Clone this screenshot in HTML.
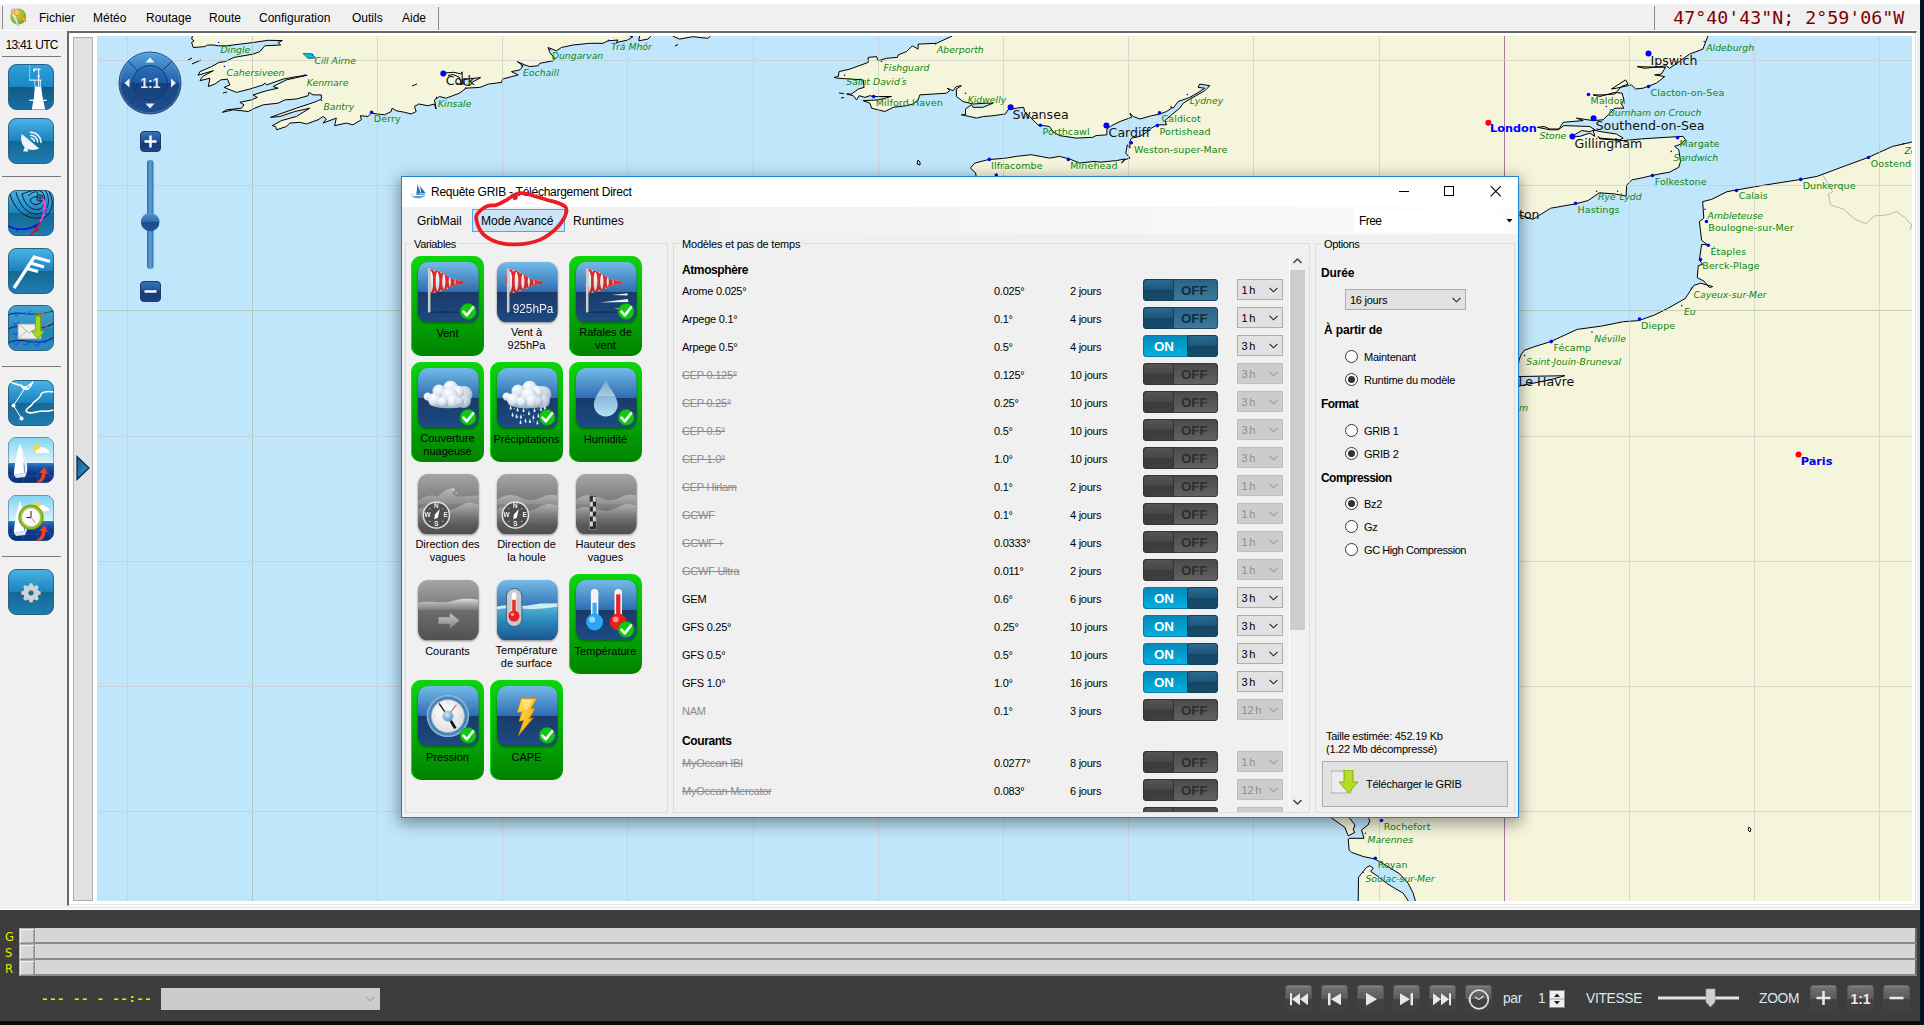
<!DOCTYPE html><html lang="fr"><head><meta charset="utf-8"><title>Requête GRIB</title><style>
*{box-sizing:border-box;margin:0;padding:0}
html,body{width:1924px;height:1025px;overflow:hidden}
body{position:relative;background:#f0f0f0;font-family:"Liberation Sans",sans-serif;font-size:12px;color:#000}
.abs{position:absolute}
#topwhite{left:0;top:0;width:1920px;height:4px;background:#fff}
#rblack{left:1920px;top:0;width:4px;height:1025px;background:#00102a}
#menubar{left:0;top:4px;width:1920px;height:27px;background:#f0f0f0;border-bottom:1px solid #fff}
#menubar span{position:absolute;top:7px;font-size:12px;white-space:nowrap}
.vsep{position:absolute;width:1px;background:#8a8a8a}
#coords{left:1673.2px;top:6.8px;font-family:"DejaVu Sans Mono",monospace;font-size:18.3px;color:#800000;white-space:pre;line-height:22px}
#utc{left:5.500px;top:38px;word-spacing:1px;font-size:12px;line-height:14px;letter-spacing:-.75px;white-space:nowrap}
.hsep{position:absolute;left:2px;width:59px;height:1px;background:#7a7a7a}
.sico{position:absolute;left:8px}
#frame{left:67px;top:31px;width:1850px;height:875px;background:#fff;border-top:2px solid #696969;border-left:2px solid #696969;border-right:1px solid #fff;border-bottom:1px solid #fff}
#frame i{position:absolute;left:0;top:0;right:0;bottom:0;border-right:1px solid #e3e3e3;border-bottom:1px solid #e3e3e3}
#strip{left:73px;top:37px;width:20px;height:864px;background:#e1e1e1;border:1px solid #adadad}
.map{position:absolute;left:97px;top:36px}
.li{font:italic 9.3px "DejaVu Sans",sans-serif;fill:#0d850d}
.lr{font:9.5px "DejaVu Sans",sans-serif;fill:#0d850d;letter-spacing:.1px}
.lb{font:12.6px "DejaVu Sans",sans-serif;fill:#111}
.lc{font:bold 11.3px "DejaVu Sans",sans-serif;fill:#0000ff}
#bottom{left:0;top:909px;width:1920px;height:112px;background:#3d3d3d;border-top:1px solid #fff}
#bblack{left:0;top:1021px;width:1920px;height:4px;background:#0a0a0a}
.trk{position:absolute;left:35px;width:1882px;height:16px;background:#d6d6d6;border-bottom:2px solid #8a8a8a;border-right:2px solid #696969}
.cb{position:absolute;left:19px;width:16px;height:16px;background:#d6d6d6;border:1px solid #8c8c8c;border-top-color:#b4b4b4;border-left-color:#b4b4b4;box-shadow:inset 1px 1px 0 0 #f2f2f2,inset -1px -1px 0 0 #a8a8a8}
.gsr{position:absolute;left:5px;font:11.5px "DejaVu Sans",sans-serif;color:#e8e800;line-height:12px}
#dashes{left:41px;top:991px;transform:scaleX(1.317);transform-origin:0 0;font:bold 10px "DejaVu Sans Mono",monospace;color:#e8e800;white-space:pre;line-height:16px}
#combo{left:161px;top:988px;width:219px;height:22px;background:#cccccc}
.pb{position:absolute;top:985px;width:27px;height:27px;border-radius:4px 4px 3px 3px;background:linear-gradient(#8e8e8e 0,#6e6e6e 12%,#5a5a5a 50%,#424242 52%,#3f3f3f 100%);box-shadow:inset 0 0 0 1px rgba(70,70,70,.5)}
.pb svg{position:absolute;left:0;top:0}
.btxt{position:absolute;color:#dfe6ee;letter-spacing:-.3px;font-size:13.8px;line-height:16px;white-space:nowrap}
/* dialog */
#dlg{left:401px;top:176px;width:1118px;height:642px;background:#f0f0f0;box-shadow:0 0 0 1px #1883d7 inset,0 4px 14px 2px rgba(0,0,0,.38)}
#dlg .bd{position:absolute;left:0;top:0;width:1118px;height:642px;border:1px solid #1883d7;pointer-events:none}
#title{left:1px;top:1px;width:1116px;height:30px;background:#fff}
#title span{position:absolute;left:29px;top:8px;font-size:12px;line-height:14px;white-space:nowrap;letter-spacing:-.26px}
#strip2{left:1px;top:31px;width:1116px;height:27px;background:linear-gradient(90deg,#f0f0f0 0,#f2f2f2 35%,#f7f7f7 70%,#fbfbfb 100%)}
.tab{position:absolute;top:38px;font-size:12px;line-height:14px;white-space:nowrap}
#tabsel{left:71px;top:33px;width:93px;height:23px;background:#cce4f7;border:1px solid #5aa4e8}
#free{left:954px;top:33px;width:148px;height:23px;background:#fff}
#free span{position:absolute;left:4px;top:5px;font-size:12px;line-height:14px;letter-spacing:-.6px}
.grp{position:absolute;border:1px solid #dcdcdc}
.grp>b{position:absolute;top:-6.5px;left:6px;background:#f0f0f0;padding:0 2px;font-weight:normal;font-size:11px;line-height:13px;white-space:nowrap;letter-spacing:-.35px}
.tile{position:absolute;width:73px;height:100px;border-radius:10px}
.tile.sel{background:linear-gradient(#0bd50b,#06b406 45%,#008300);box-shadow:inset 1px 0 0 #12e212}
.tico{position:absolute;left:7px;top:5.800px;filter:drop-shadow(0 1.5px 1px rgba(0,0,0,.45))}
.tl{position:absolute;left:-6.5px;width:86px;top:71px;text-align:center;font-size:11px;line-height:12.5px;white-space:nowrap}
.tl.two{top:70px}
.row{position:absolute;left:0;height:22px;width:640px}
.row span{position:absolute;top:5.5px;font-size:11px;line-height:13px;white-space:nowrap;letter-spacing:-.25px}
.row .n{left:281px}.row .r{left:593px}.row .d{left:669px}
.row.dis .n{color:#8a8a8a;text-decoration:line-through}
.row.nam .n{color:#8a8a8a}
.hd{position:absolute;left:281px;font-weight:bold;font-size:12px;line-height:13px;letter-spacing:-.4px}
.tg{position:absolute;left:742px;top:0;width:75px;height:22px;border-radius:4px;overflow:hidden}
.tg b{position:absolute;top:3.8px;font-size:13.3px;line-height:16px;font-weight:bold}
.tg i{position:absolute;top:0;width:31px;height:22px;border-radius:4px}
.tg.off{background:linear-gradient(#2a6486,#3d7a9c);box-shadow:inset 0 0 0 1px #1d4a68}
.tg.off i{left:0;background:linear-gradient(#2d6c92 0,#1c587e 48%,#154866 52%,#174b6a);box-shadow:inset 0 0 0 1px #133f5c}
.tg.off b{left:38px;color:#0e2f45}
.tg.on{background:linear-gradient(#0488ba,#02b2e2);box-shadow:inset 0 0 0 1px #0a78a8}
.tg.on i{left:44px;background:linear-gradient(#2d6c92 0,#1c587e 48%,#154866 52%,#174b6a);box-shadow:inset 0 0 0 1px #133f5c}
.tg.on b{left:11px;color:#fff}
.tg.dis{background:linear-gradient(#4a4a4a,#626262);box-shadow:inset 0 0 0 1px #3a3a3a}
.tg.dis i{left:0;background:linear-gradient(#555 0,#474747 48%,#3c3c3c 52%,#404040);box-shadow:inset 0 0 0 1px #333}
.tg.dis b{left:38px;color:#2e2e2e}
.sel2{position:absolute;left:836px;top:0;width:46px;height:21px;background:#e1e1e1;border:1px solid #adadad}
.sel2 span{left:3.5px;top:4px;font-size:11px;letter-spacing:0;word-spacing:-1.5px}
.sel2.dis{background:#cccccc;border-color:#bfbfbf}.sel2.dis span{color:#8c8c8c}
.sel2 svg{position:absolute;right:4px;top:7px}
.opt{position:absolute;font-size:11px;line-height:13px;white-space:nowrap;letter-spacing:-.25px}
.opth{position:absolute;font-weight:bold;font-size:12px;line-height:13px;white-space:nowrap;letter-spacing:-.15px}
.rad{position:absolute;width:13px;height:13px;border-radius:50%;border:1px solid #333;background:#fff}
.rad.on:after{content:"";position:absolute;left:2px;top:2px;width:7px;height:7px;border-radius:50%;background:#333}
</style></head><body><div id="topwhite" class="abs"></div><div id="menubar" class="abs"><div class="vsep" style="left:2px;top:2px;height:23px"></div><svg class="abs" style="left:9px;top:2px" width="20" height="22" viewBox="0 0 20 22"><defs><radialGradient id="mg" cx=".4" cy=".35" r=".7"><stop offset="0" stop-color="#b4e05a"/><stop offset="1" stop-color="#6aaa20"/></radialGradient></defs><circle cx="9.200" cy="10.500" r="8" fill="url(#mg)"/><path d="M4 4.500 C5.500 6 7.500 8 7 10 C6.500 12 8 13 8.500 15 C9 17 9.500 19 9.500 19.500 L8.500 20 L7.500 18 C7 16 5.500 14 5 12 C3.500 11 3 9 3 7Z" fill="#e8e8ee" stroke="#a8a8b4" stroke-width=".500"/><circle cx="4.500" cy="5" r="2.200" fill="none" stroke="#b0b0bc" stroke-width="1"/><path d="M9.500 8.500 L16 14.500" stroke="#f6a21e" stroke-width="2.800" stroke-linecap="round"/><circle cx="8" cy="6.500" r="3.200" fill="#fcc84a" stroke="#e89010" stroke-width=".800"/><circle cx="7.300" cy="5.600" r="1" fill="#c8d8e8"/></svg><span style="left:39px">Fichier</span><span style="left:93px">Météo</span><span style="left:146px">Routage</span><span style="left:209px">Route</span><span style="left:259px">Configuration</span><span style="left:352px">Outils</span><span style="left:402px">Aide</span><div class="vsep" style="left:438px;top:3px;height:23px"></div><div class="vsep" style="left:1654px;top:2px;height:24px"></div></div><div id="coords" class="abs">47°40'43"N; 2°59'06"W</div><div id="utc" class="abs">13:41 UTC</div><div class="hsep" style="top:56px"></div><div class="hsep" style="top:176px"></div><div class="hsep" style="top:366px"></div><div class="hsep" style="top:556px"></div><svg class="sico" style="top:64px" width="46" height="46" viewBox="0 0 46 46"><defs><linearGradient id="sb1" x1="0" y1="0" x2="0" y2="1"><stop offset="0" stop-color="#2ba2de"/><stop offset=".5" stop-color="#1c86c4"/><stop offset=".5" stop-color="#125a84"/><stop offset="1" stop-color="#1870a6"/></linearGradient><clipPath id="sc1"><rect x=".5" y=".5" width="45" height="45" rx="8"/></clipPath></defs><rect x=".5" y=".5" width="45" height="45" rx="8" fill="url(#sb1)" stroke="#2a5f80" stroke-width="1"/><g clip-path="url(#sc1)"><g fill="#fff" stroke="none"><path d="M26.800 22.400 L33.200 22.400 L34.500 33 L37.300 46 L23.700 46 L26 33Z"/><rect x="21.300" y="35.700" width="17.400" height="1.200"/><rect x="30.100" y="4.900" width="1.100" height="17.600"/><rect x="25.500" y="4.600" width="7" height="1.100"/><path d="M25.500 4.600 v3.600 l2.200 -1.800z"/><rect x="29.600" y="11" width="2" height="2.400"/><rect x="21" y="15.600" width="12.500" height="1"/><rect x="26.400" y="16" width=".900" height="6.500" opacity=".8"/><rect x="32" y="16" width=".900" height="6.500" opacity=".8"/><rect x="21.400" y="1" width=".800" height="15" opacity=".6"/></g></g></svg>
<svg class="sico" style="top:118px" width="46" height="46" viewBox="0 0 46 46"><defs><linearGradient id="sb2" x1="0" y1="0" x2="0" y2="1"><stop offset="0" stop-color="#49b4e6"/><stop offset=".5" stop-color="#1b82bd"/><stop offset=".5" stop-color="#156892"/><stop offset="1" stop-color="#1f7db2"/></linearGradient><clipPath id="sc2"><rect x=".5" y=".5" width="45" height="45" rx="8"/></clipPath></defs><rect x=".5" y=".5" width="45" height="45" rx="8" fill="url(#sb2)" stroke="#2a5f80" stroke-width="1"/><g clip-path="url(#sc2)"><g fill="#eef4f8"><path d="M13.800 16 C12 22 14 28 18 30 C22 32.500 27 32.500 31.300 30.500Z"/><path d="M16.500 29 L15.300 33.600 L20.200 33.600 L19.800 30.800Z"/></g><g fill="none" stroke="#eef4f8" stroke-width="1.600" stroke-linecap="round"><path d="M23.400 20.200 A3.800 3.800 0 0 1 26.300 23.400"/><path d="M22.900 17.200 A7 7 0 0 1 29.600 24"/><path d="M22.300 14.200 A10.500 10.500 0 0 1 33 24.500"/></g></g></svg>
<svg class="sico" style="top:190px" width="46" height="46" viewBox="0 0 46 46"><defs><linearGradient id="sb3" x1="0" y1="0" x2="0" y2="1"><stop offset="0" stop-color="#49b4e6"/><stop offset=".5" stop-color="#1b82bd"/><stop offset=".5" stop-color="#156892"/><stop offset="1" stop-color="#1f7db2"/></linearGradient><clipPath id="sc3"><rect x=".5" y=".5" width="45" height="45" rx="8"/></clipPath></defs><rect x=".5" y=".5" width="45" height="45" rx="8" fill="url(#sb3)" stroke="#2a5f80" stroke-width="1"/><g clip-path="url(#sc3)"><g fill="none" stroke="#0c1c2c" stroke-width="1"><path d="M2 4 C6 20 20 32 36 27 C46 23 46 8 40 0"/><path d="M8 2 C12 18 22 27 34 23 C42 19 42 6 37 0"/><path d="M14 4 C16 14 24 22 32 19 C38 16 38 6 34 2 C28 -2 20 2 14 4"/><path d="M20 6 C24 2 30 0 30 4 C30 8 24 6 22 10 C24 16 32 16 34 10"/><circle cx="32" cy="8" r="3.2"/><circle cx="32" cy="8" r="1.2"/></g><path d="M0 36 C10 41 22 40 30 34" fill="none" stroke="#0a18e0" stroke-width="1.6"/><path d="M8 39 l3 0 l-1.5 3z M26 37 l3 -1.5 l-.5 3.5z" fill="#0a18e0"/><path d="M35 8 C38 16 36 26 32 32" fill="none" stroke="#ff3cf0" stroke-width="1.6"/><path d="M36 10 l2.5 1.5 l-2.5 1.5z M36.5 17 l2.5 1.5 l-2.5 1.5z M35.5 24 l2.5 1.5 l-3 1.5z" fill="#ff3cf0"/><path d="M32 32 C29 38 26 42 22 46" fill="none" stroke="#e01010" stroke-width="1.6"/><circle cx="28.5" cy="40" r="2" fill="#e01010"/></g></svg>
<svg class="sico" style="top:248px" width="46" height="46" viewBox="0 0 46 46"><defs><linearGradient id="sb4" x1="0" y1="0" x2="0" y2="1"><stop offset="0" stop-color="#49b4e6"/><stop offset=".5" stop-color="#1b82bd"/><stop offset=".5" stop-color="#156892"/><stop offset="1" stop-color="#1f7db2"/></linearGradient><clipPath id="sc4"><rect x=".5" y=".5" width="45" height="45" rx="8"/></clipPath></defs><rect x=".5" y=".5" width="45" height="45" rx="8" fill="url(#sb4)" stroke="#2a5f80" stroke-width="1"/><g clip-path="url(#sc4)"><g stroke="#fff" stroke-width="3.2" fill="none" stroke-linecap="butt"><path d="M6 40 L27 8"/><path d="M26 9 L42 13.5"/><path d="M22.5 15 L36 19"/><path d="M19 20.5 L30 23.5"/></g></g></svg>
<svg class="sico" style="top:305px" width="46" height="46" viewBox="0 0 46 46"><defs><linearGradient id="sb5" x1="0" y1="0" x2="0" y2="1"><stop offset="0" stop-color="#3fa6d4"/><stop offset=".5" stop-color="#2b8fc0"/><stop offset=".5" stop-color="#2383b4"/><stop offset="1" stop-color="#2a8aba"/></linearGradient><clipPath id="sc5"><rect x=".5" y=".5" width="45" height="45" rx="8"/></clipPath></defs><rect x=".5" y=".5" width="45" height="45" rx="8" fill="url(#sb5)" stroke="#2a5f80" stroke-width="1"/><g clip-path="url(#sc5)"><g fill="none" stroke-width="1.1"><path d="M0 10 C10 4 20 14 46 6" stroke="#10307a"/><path d="M0 24 C14 16 26 30 46 18" stroke="#10307a"/><path d="M0 38 C14 30 30 44 46 32" stroke="#10307a"/><path d="M6 9 l3 2 l4 -4 M16 7 l3 2 l4 -3" stroke="#2a60ff"/><path d="M25 8 l3 2 l4 -3 M35 8 l3 1 l4 -3" stroke="#3a9a2a"/><path d="M30 8 l3 1.5 l3 -3 M36 20 l2 1 l4 -4" stroke="#e06a20"/><path d="M5 18 l3 2 l3 -3 M5 28 l3 2 l3 -3 M5 38 l3 2 l4 -4 M15 39 l3 1 l4 -3 M26 39 l3 2 l4 -4 M34 37 l3 1 l4 -3" stroke="#1a50ff"/></g><rect x="10" y="19" width="23" height="15" fill="#eeeeee" stroke="#9a9a9a" stroke-width=".8"/><path d="M10 19 L21.5 28 L33 19 M10 34 L18.5 26 M33 34 L24.5 26" fill="none" stroke="#aaa" stroke-width=".8"/><path d="M27.5 11 h5 v15 h4 l-6.5 8 l-6.5 -8 h4z" fill="#a6d81a" stroke="#6f9a10" stroke-width=".8"/></g></svg>
<svg class="sico" style="top:380px" width="46" height="46" viewBox="0 0 46 46"><defs><linearGradient id="sb6" x1="0" y1="0" x2="0" y2="1"><stop offset="0" stop-color="#49b4e6"/><stop offset=".5" stop-color="#1b82bd"/><stop offset=".5" stop-color="#156892"/><stop offset="1" stop-color="#1f7db2"/></linearGradient><clipPath id="sc6"><rect x=".5" y=".5" width="45" height="45" rx="8"/></clipPath></defs><rect x=".5" y=".5" width="45" height="45" rx="8" fill="url(#sb6)" stroke="#2a5f80" stroke-width="1"/><g clip-path="url(#sc6)"><g fill="none" stroke="#fff" stroke-width="1.5" stroke-linejoin="round"><path d="M0 2 C6 2 10 6 13 5 C17 10 22 4 25 2 C22 8 20 9 19 10"/><path d="M46 12 C40 11 36 11 33 14 C33 18 28 20 26 22 C22 28 18 28 18 31 C22 36 30 30 36 31 C40 32 44 30 46 30"/><path d="M13 5 C15 12 20 7 20 9"/></g><path d="M17 8 L5.5 25.5 L13.5 38.5" fill="none" stroke="#fff" stroke-width="1"/><g fill="#fff"><circle cx="17" cy="8" r="2"/><circle cx="5.5" cy="25.5" r="2"/><circle cx="13.5" cy="38.5" r="2"/></g></g></svg>
<svg class="sico" style="top:437px" width="46" height="46" viewBox="0 0 46 46"><defs><linearGradient id="sb7" x1="0" y1="0" x2="0" y2="1"><stop offset="0" stop-color="#49b4e6"/><stop offset=".5" stop-color="#1b82bd"/><stop offset=".5" stop-color="#156892"/><stop offset="1" stop-color="#1f7db2"/></linearGradient><clipPath id="sc7"><rect x=".5" y=".5" width="45" height="45" rx="8"/></clipPath></defs><rect x=".5" y=".5" width="45" height="45" rx="8" fill="url(#sb7)" stroke="#2a5f80" stroke-width="1"/><g clip-path="url(#sc7)"><defs><linearGradient id="sk7" x1="0" y1="0" x2="0" y2="1"><stop offset="0" stop-color="#7fd4f4"/><stop offset="1" stop-color="#dff3fb"/></linearGradient><linearGradient id="se7" x1="0" y1="0" x2="0" y2="1"><stop offset="0" stop-color="#2f7fc8"/><stop offset=".35" stop-color="#123c8c"/><stop offset="1" stop-color="#0e2f78"/></linearGradient></defs><rect x="0" y="0" width="46" height="27" fill="url(#sk7)"/><rect x="0" y="26" width="46" height="20" fill="url(#se7)"/><g stroke="#3a6ac0" stroke-width=".6" opacity=".7"><path d="M0 33 H46 M0 39 H46 M8 27 L2 46 M18 27 L15 46 M28 27 L30 46 M38 27 L44 46"/></g><path d="M12 6 C8 18 6 30 6 38 L16 36 C16 24 14 12 12 6Z" fill="#fff"/><path d="M13 9 C18 18 20 28 19 35 L16.5 36 C17 26 15 16 13 9Z" fill="#e4eef6"/><path d="M6 38 L19 35 L17 40 L8 41Z" fill="#dfe8f0"/><path d="M26 46 C32 44 34 40 34 36 L31 36 L36.5 30 L40 37 L37.5 36.5 C37 42 35 45 32 46Z" fill="#e8422a"/><circle cx="29" cy="11" r="3" fill="#ffd820"/><g stroke="#ffd820" stroke-width="1"><path d="M29 5.5 v2 M24 8 l1.6 1.2 M33.5 7 l-1.4 1.4 M24 13 l1.8 -.6"/></g><path d="M28 16 a3 3 0 0 1 3 -4 a4 4 0 0 1 7 0 a3 3 0 0 1 3 4z" fill="#fff"/></g></svg>
<svg class="sico" style="top:495px" width="46" height="46" viewBox="0 0 46 46"><defs><linearGradient id="sb8" x1="0" y1="0" x2="0" y2="1"><stop offset="0" stop-color="#49b4e6"/><stop offset=".5" stop-color="#1b82bd"/><stop offset=".5" stop-color="#156892"/><stop offset="1" stop-color="#1f7db2"/></linearGradient><clipPath id="sc8"><rect x=".5" y=".5" width="45" height="45" rx="8"/></clipPath></defs><rect x=".5" y=".5" width="45" height="45" rx="8" fill="url(#sb8)" stroke="#2a5f80" stroke-width="1"/><g clip-path="url(#sc8)"><defs><linearGradient id="sk8" x1="0" y1="0" x2="0" y2="1"><stop offset="0" stop-color="#7fd4f4"/><stop offset="1" stop-color="#dff3fb"/></linearGradient><linearGradient id="se8" x1="0" y1="0" x2="0" y2="1"><stop offset="0" stop-color="#2f7fc8"/><stop offset=".35" stop-color="#123c8c"/><stop offset="1" stop-color="#0e2f78"/></linearGradient></defs><rect x="0" y="0" width="46" height="27" fill="url(#sk8)"/><rect x="0" y="26" width="46" height="20" fill="url(#se8)"/><g stroke="#3a6ac0" stroke-width=".6" opacity=".7"><path d="M0 33 H46 M0 39 H46 M8 27 L2 46 M18 27 L15 46 M28 27 L30 46 M38 27 L44 46"/></g><path d="M12 6 C8 18 6 30 6 38 L16 36 C16 24 14 12 12 6Z" fill="#fff"/><path d="M13 9 C18 18 20 28 19 35 L16.5 36 C17 26 15 16 13 9Z" fill="#e4eef6"/><path d="M6 38 L19 35 L17 40 L8 41Z" fill="#dfe8f0"/><path d="M26 46 C32 44 34 40 34 36 L31 36 L36.5 30 L40 37 L37.5 36.5 C37 42 35 45 32 46Z" fill="#e8422a"/><circle cx="29" cy="11" r="3" fill="#ffd820"/><g stroke="#ffd820" stroke-width="1"><path d="M29 5.5 v2 M24 8 l1.6 1.2 M33.5 7 l-1.4 1.4 M24 13 l1.8 -.6"/></g><path d="M28 16 a3 3 0 0 1 3 -4 a4 4 0 0 1 7 0 a3 3 0 0 1 3 4z" fill="#fff"/><circle cx="23" cy="22.300" r="12.300" fill="#8cc024" stroke="#5d8a10" stroke-width=".8"/><circle cx="23" cy="22.300" r="9.200" fill="#fafafa" stroke="#c8d8a0" stroke-width=".6"/><path d="M23 16 V22.5 H18.5" stroke="#222" stroke-width="1" fill="none"/><path d="M23 22.5 L27.5 28" stroke="#d03030" stroke-width=".7"/></g></svg>
<svg class="sico" style="top:569px" width="46" height="46" viewBox="0 0 46 46"><defs><linearGradient id="sb9" x1="0" y1="0" x2="0" y2="1"><stop offset="0" stop-color="#49b4e6"/><stop offset=".5" stop-color="#1b82bd"/><stop offset=".5" stop-color="#156892"/><stop offset="1" stop-color="#1f7db2"/></linearGradient><clipPath id="sc9"><rect x=".5" y=".5" width="45" height="45" rx="8"/></clipPath></defs><rect x=".5" y=".5" width="45" height="45" rx="8" fill="url(#sb9)" stroke="#2a5f80" stroke-width="1"/><g clip-path="url(#sc9)"><path transform="translate(23 23) scale(.88) translate(-23 -23)" fill="#d2d2d2" fill-rule="evenodd" d="M21.3 13 h3.4 l.6 2.6 l2 .8 l2.3 -1.4 l2.4 2.4 l-1.4 2.3 l.8 2 l2.6 .6 v3.4 l-2.6 .6 l-.8 2 l1.4 2.3 l-2.4 2.4 l-2.3 -1.4 l-2 .8 l-.6 2.6 h-3.4 l-.6 -2.6 l-2 -.8 l-2.3 1.4 l-2.4 -2.4 l1.4 -2.3 l-.8 -2 l-2.600 -.6 v-3.4 l2.600 -.6 l.8 -2 l-1.400 -2.300 l2.400 -2.400 l2.300 1.400 l2 -.8z M23 21 a3 3 0 1 0 .01 0z"/></g></svg><div id="frame" class="abs"><i></i></div><div id="strip" class="abs"></div><svg class="abs" style="left:75px;top:454px" width="16" height="28" viewBox="0 0 16 28"><defs><linearGradient id="tg1" x1="0" y1="0" x2="1" y2="1"><stop offset="0" stop-color="#1a5a90"/><stop offset="1" stop-color="#2f9ad8"/></linearGradient></defs><path d="M2 2.500 L14 14 L2 25.500Z" fill="url(#tg1)" stroke="#0c2438" stroke-width="1.200"/></svg><svg class="map" width="1815" height="865" viewBox="97 36 1815 865">
<rect x="97" y="36" width="1815" height="865" fill="#c0e6fc"/>
<path fill="#f5f5dc" stroke="#000" stroke-width="1" stroke-linejoin="round" d="M192.5 30 L192.5 36 L191.6 39.1 L194.1 40.8 L191.6 42.5 L193.3 47.5 L204.9 46.6 L207.4 45 L213.3 45 L218.3 45.8 L226.6 45.8 L253.2 42.5 L268.1 40.3 L282.3 40.6 L278.1 42.5 L280.6 45 L264.8 45.8 L259.8 51.6 L253.2 54.1 L234.1 57.4 L224.9 61.6 L219.1 62.4 L211.6 66.6 L200 71.6 L198 75.2 L213.3 70.7 L202.5 76.6 L200 80.7 L209.9 78.2 L208.3 86.5 L214.9 84.1 L220.7 79.9 L227.4 79.1 L229.9 84.9 L224.1 87.4 L236.5 92.4 L249.9 89 L263.2 84.9 L264.8 82.9 L266.5 84.9 L283.1 79.1 L296.4 76.6 L307.2 75.2 L286.4 79.9 L273.1 86.5 L278.1 88.2 L266.5 90.7 L253.2 94.9 L257.3 97.4 L251.5 99.9 L239.9 102.3 L244 104.8 L241.5 108.2 L226.6 109.8 L222.4 112.3 L233.2 109.8 L248.2 111.5 L254.8 108.2 L263.2 104.8 L278.1 103.2 L284.8 99.9 L296.4 99 L308.1 95.7 L308.9 92.4 L313.1 94.9 L321.4 94.9 L321.4 99 L316.4 101.5 L296.4 108.2 L279.8 114 L270.6 117.3 L279.8 116.5 L294.8 111.5 L309.7 108.2 L296.4 116.5 L281.5 120.6 L272.3 125.6 L275.6 126.5 L276.5 129.8 L286.4 126.5 L289.8 123.1 L299.8 122.3 L306.4 124 L318 119.8 L323 116.5 L326.4 119 L323 123.1 L336.3 118.1 L334.7 125.6 L346.3 123.1 L353 124.8 L361.3 119.8 L360.5 115.7 L367.9 116.5 L371.3 113.2 L384.6 114.8 L391.2 111.5 L392.1 108.2 L396.2 110.7 L404.5 112.3 L411.2 114 L416.2 111.5 L414.5 106.5 L418.7 104 L427.8 105.7 L434.5 104 L436.1 109 L434.5 99.9 L439.5 96.5 L446.1 98.2 L459.4 93.2 L466.1 88.2 L464.9 88.2 L479.9 87.4 L488.2 84.1 L501.5 82.4 L502.4 79.1 L518.2 74.9 L511.5 71.6 L519.8 69.9 L523.2 65.8 L517.3 61.6 L524.8 64.9 L529.8 66.6 L538.1 65.8 L539.8 63.3 L553.1 60.8 L554.8 58.3 L549.8 52.5 L548.1 47.5 L556.4 50.8 L561.4 47.5 L573.1 45 L589.7 43.3 L603 43.3 L608 40.8 L618 40 L616.3 42.5 L627.9 40 L632.9 36.7 L629.6 36 L629.6 30 Z"/>
<path fill="#f5f5dc" stroke="#000" stroke-width="1" stroke-linejoin="round" d="M639.6 30 L639.6 36 L638.8 40.8 L647.9 39.1 L650.4 36.7 L649.6 36 L649.6 30 Z"/>
<path fill="#f5f5dc" stroke="#000" stroke-width="1" stroke-linejoin="round" d="M672.8 30 L672.8 36 L679.5 39.1 L692.8 36.7 L707.8 38.3 L710.3 36 L710.3 30 Z"/>
<path fill="#f5f5dc" stroke="#000" stroke-width="1" stroke-linejoin="round" d="M952.2 30 L952.2 36 L936.4 43.3 L918.1 44.1 L918.1 49.1 L912.3 45.8 L906.5 51.6 L898.2 54.9 L897.3 57.4 L886.5 58.3 L878.2 60.8 L876.5 56.6 L868.2 57.4 L868.2 62.4 L849.9 69.1 L839.1 71.6 L838.3 76.6 L834.1 77.4 L837.5 78.2 L863.2 79.9 L864.1 87.4 L858.3 89 L851.6 94 L846.6 94 L853.3 95.7 L856.6 99.9 L859.1 95.7 L864.9 97.4 L869.9 95.7 L873.2 96.5 L891.5 96.5 L878.2 99.9 L863.2 100.7 L869.9 103.2 L871.6 108.2 L884.9 111.5 L893.2 107.3 L906.5 105.7 L913.1 104 L918.1 99.9 L919.8 94.9 L946.4 93.2 L949.7 90.7 L947.2 88.2 L953.1 90.7 L956.4 86.5 L961.4 85.7 L956.4 89 L956.4 96.5 L963 101.5 L973 104 L986.3 103.2 L993 103.2 L983 107.3 L973 107.3 L971.4 104.8 L965.5 109 L965.5 114.8 L961.4 114.8 L969.7 116.5 L976.3 118.1 L983.8 116.5 L993 115.7 L1005.4 114 L1007.9 109.8 L1016.3 108.2 L1023.7 107.3 L1024.6 111.5 L1029.6 116.5 L1037.9 124.8 L1042.9 125.6 L1049.5 126.5 L1052.8 131.5 L1059.5 135.6 L1076.1 138.1 L1092.8 137.3 L1096.1 135.6 L1106.9 134.8 L1106.9 129 L1111.6 125.6 L1120 121.5 L1131.6 117.3 L1129.9 113.2 L1133.3 116.5 L1139.9 119 L1151.6 115.7 L1159.9 114 L1166.5 111.5 L1171.5 108.2 L1170.7 106.5 L1173.2 108.2 L1178.2 101.5 L1189.8 97.4 L1199.8 91.5 L1204.8 88.2 L1198.1 87.4 L1199.8 84.1 L1209.8 85.7 L1204.8 90.7 L1191.5 98.2 L1183.2 103.2 L1179.8 108.2 L1171.5 114.8 L1164.9 120.6 L1166.5 124.8 L1157.4 124.8 L1151.6 128.1 L1146.6 132.3 L1139.9 136.4 L1131.6 138.1 L1129.9 141.4 L1129.9 148.1 L1127.4 144.8 L1125.8 153.1 L1129.9 158.1 L1124.9 159.7 L1121.6 163.1 L1124.9 158.9 L1116.6 160.6 L1100 162.2 L1094.4 161.4 L1079.5 163.1 L1069.5 158.9 L1059.5 156.4 L1049.5 158.1 L1031.2 154.7 L1016.3 156.4 L1006.3 158.1 L988 159.7 L974.7 163.1 L970.5 168 L975.5 173 L976.3 176.7 L976 400 L1400 400 L1500 192 L1500 211.5 L1518.7 214.8 L1533.1 219.3 L1541.9 213.7 L1550.7 208.2 L1576 203.8 L1588.2 200.5 L1599.2 192.8 L1614.6 193.9 L1626.1 196.1 L1626.7 185.1 L1632.2 179.6 L1633.1 179.7 L1641.4 178 L1652.2 175.5 L1659.7 173.9 L1669.6 172.2 L1678.8 167.2 L1680.5 161.4 L1678.8 149.8 L1674.6 146.4 L1681.3 143.9 L1685.4 139.8 L1683 136.4 L1666.3 137.3 L1641.4 138.9 L1623.1 140.6 L1599.8 138.9 L1598.1 136.4 L1599.8 138.1 L1619.8 139.8 L1623.1 138.1 L1616.4 134 L1599.8 131.5 L1593.1 129.8 L1594.8 136.4 L1589.8 133.1 L1579.8 136.4 L1571.5 136.4 L1575.7 134 L1581.5 130.6 L1589.8 131.5 L1594.8 129.8 L1589.8 126.5 L1564 125.6 L1558.2 129.8 L1549.9 129.8 L1537.4 127.3 L1544.1 126.5 L1549.9 129 L1559 129 L1563.2 122.3 L1583.2 120.6 L1576.5 118.1 L1593.1 120.6 L1603.1 119.8 L1608.1 114.8 L1611.4 111.5 L1614.8 108.2 L1623.9 108.2 L1621.4 104 L1623.9 99.9 L1622.2 93.2 L1614.8 92.4 L1599.8 96.5 L1593.1 94.9 L1603.1 94.9 L1614.8 94 L1621.4 86.5 L1628.1 84.1 L1625.6 79.9 L1611.4 89 L1616.4 88.2 L1631.4 84.9 L1635.6 89 L1643 88.2 L1656.3 83.2 L1664.7 76.6 L1654.7 74.9 L1661.3 74.1 L1665.5 67.4 L1637.2 66.6 L1644.7 68.3 L1666.3 65.8 L1669.6 68.3 L1689.6 54.1 L1702.9 49.1 L1707.9 36 L1707.9 30 Z"/>
<path fill="#f5f5dc" stroke="#000" stroke-width="1" stroke-linejoin="round" d="M1914.3 141.5 L1892.3 146.5 L1868 157.5 L1843.8 166.4 L1817.3 176.3 L1799.7 179.6 L1764.5 185.1 L1736.9 189.9 L1727 191.7 L1711.6 199.4 L1702.7 201.6 L1703.8 218.2 L1699.4 221.5 L1701.6 240.2 L1707.2 244.6 L1701.6 244.6 L1699.4 260 L1702.7 264.4 L1698.3 265.5 L1697.2 277.7 L1703.8 281 L1709.4 287.6 L1712.7 286.5 L1700.5 283.2 L1693.9 285.4 L1685.1 298.6 L1667.5 308.5 L1654.3 315.1 L1638.8 320.6 L1623.4 321.7 L1601.4 326.1 L1577.1 329.4 L1550.7 341.6 L1533.1 347.1 L1524.2 350.4 L1520.9 355 L1519.1 359.9 L1516.6 376.6 L1564.9 375.7 L1549.9 379.9 L1516.6 386.5 L1500 500 L1367 700 L1367.4 817.5 L1369.9 820 L1368.2 824.9 L1361.5 829.9 L1364 838.3 L1349.9 838.3 L1348.2 839.1 L1349.1 849.9 L1351.6 852.4 L1363.2 856.5 L1374.8 859 L1386.5 865.7 L1399.8 874 L1408.1 883.2 L1413.1 893.1 L1415.6 901.8 L1920 905 L1920 30 Z"/>
<path fill="#f5f5dc" stroke="#000" stroke-width="1" stroke-linejoin="round" d="M1330.8 817.5 L1344.9 827.4 L1348.2 835.8 L1354.9 832.4 L1353.2 829.9 L1354.9 824.9 L1349.1 817.5 L1341.6 810 Z"/>
<path fill="#f5f5dc" stroke="#000" stroke-width="1" stroke-linejoin="round" d="M1358.2 901.8 L1358.5 877.3 L1366.5 867.4 L1369.9 865.7 L1373.2 868.2 L1370.7 871.5 L1378.2 876.5 L1386.5 883.2 L1393.1 887.3 L1403.1 893.1 L1408.9 901.8 Z"/>
<path fill="none" stroke="#b8b8b8" stroke-width="1" d="M1822.9 175.2 L1832.8 191.7 L1828.4 193.9 L1830.6 204.9 L1843.8 209.3 L1854.8 219.3 L1865.8 223.7 L1874.6 215.9 L1887.9 214.8 L1896.7 211.5 L1905.5 218.2 L1911.7 224.8 L1909.9 230.3"/>
<path d="M470.600 78.600 L480.600 77.600 L478 79.200 L472.700 81.800 L470 85.500 L465 85 L462 80Z" fill="#c0e6fc" stroke="#000" stroke-width="1" stroke-linejoin="round"/>
<path d="M445.800 72.900 L453.700 72.300 L461.100 73.900 L462.100 71.800 L462.300 84.400 M448 75.500 L453 74.500 L459 77 L462 84.500 L456 83.500" fill="none" stroke="#000" stroke-width="1" stroke-linejoin="round"/>
<path d="M303 53.5 L311 53.5 L316 58 L308 58.5 Z" fill="#00c8c8" stroke="#0a4a4a" stroke-width=".7"/>
<path d="M918 160 l2 2 l0 3 l-3 -1z M1749 827 l2 2 l-1 3 l-2 -2z M919 163" fill="#f5f5dc" stroke="#000" stroke-width="1"/>
<path d="M412 86 l5 -2 M192 64 l9 -4 M188 60 l4 -2 M223 93 l4 -1 M675 46 l3 -1.5 M839 93 l5 .5 M841 98 l3 -.5" stroke="#000" stroke-width="1" fill="none"/>
<g fill="none" opacity=".62" shape-rendering="crispEdges"><path d="M127.0 36V901" stroke="#c9c9c9" stroke-width="1"/><path d="M252.2 36V901" stroke="#a8b8a0" stroke-width="1"/><path d="M377.4 36V901" stroke="#c9c9c9" stroke-width="1"/><path d="M502.6 36V901" stroke="#c9c9c9" stroke-width="1"/><path d="M627.8 36V901" stroke="#c9c9c9" stroke-width="1"/><path d="M753.0 36V901" stroke="#c9c9c9" stroke-width="1"/><path d="M878.2 36V901" stroke="#c9c9c9" stroke-width="1"/><path d="M1003.4 36V901" stroke="#c9c9c9" stroke-width="1"/><path d="M1128.6 36V901" stroke="#c9c9c9" stroke-width="1"/><path d="M1253.8 36V901" stroke="#c9c9c9" stroke-width="1"/><path d="M1379.0 36V901" stroke="#c9c9c9" stroke-width="1"/><path d="M1504.2 36V901" stroke="#7a2a7a" stroke-width="1"/><path d="M1629.4 36V901" stroke="#c9c9c9" stroke-width="1"/><path d="M1754.6 36V901" stroke="#c9c9c9" stroke-width="1"/><path d="M1879.8 36V901" stroke="#c9c9c9" stroke-width="1"/><path d="M97 60.5H1912" stroke="#c9c9c9" stroke-width="1"/><path d="M97 185.7H1912" stroke="#c9c9c9" stroke-width="1"/><path d="M97 310.9H1912" stroke="#a8b8a0" stroke-width="1"/><path d="M97 436.1H1912" stroke="#c9c9c9" stroke-width="1"/><path d="M97 561.3H1912" stroke="#c9c9c9" stroke-width="1"/><path d="M97 686.5H1912" stroke="#c9c9c9" stroke-width="1"/><path d="M97 811.7H1912" stroke="#c9c9c9" stroke-width="1"/></g>
<g fill="#0000ff"><circle cx="218.6" cy="42.5" r="0.8"/><circle cx="312.5" cy="54.5" r="0.8"/><circle cx="224.5" cy="66.5" r="0.8"/><circle cx="304.5" cy="75" r="0.8"/><circle cx="321.5" cy="100.5" r="0.8"/><circle cx="371.6" cy="112.3" r="1.8"/><circle cx="443.3" cy="73.6" r="3"/><circle cx="436.5" cy="97.5" r="0.8"/><circle cx="521.5" cy="65.8" r="0.8"/><circle cx="550" cy="49.5" r="0.8"/><circle cx="608.5" cy="40.3" r="0.8"/><circle cx="935.6" cy="44" r="0.8"/><circle cx="881.5" cy="61.5" r="0.8"/><circle cx="844.6" cy="75.2" r="0.8"/><circle cx="873.6" cy="96.5" r="1.8"/><circle cx="965.5" cy="93.2" r="0.8"/><circle cx="1010.6" cy="107.3" r="3"/><circle cx="1040.4" cy="125.3" r="1.8"/><circle cx="1106.4" cy="125.6" r="3"/><circle cx="989.3" cy="159.4" r="1.8"/><circle cx="1068.3" cy="159.4" r="1.8"/><circle cx="996.3" cy="175" r="1.8"/><circle cx="1187.3" cy="94.5" r="0.8"/><circle cx="1159.5" cy="112.7" r="1.8"/><circle cx="1157.4" cy="125.6" r="1.8"/><circle cx="1131.3" cy="142.8" r="1.8"/><circle cx="1704.2" cy="41.6" r="0.8"/><circle cx="1648.5" cy="53.6" r="3"/><circle cx="1648.5" cy="86.5" r="1.8"/><circle cx="1588.5" cy="94.5" r="1.8"/><circle cx="1606.4" cy="106.5" r="0.8"/><circle cx="1593.6" cy="118.3" r="3"/><circle cx="1572.4" cy="136.4" r="3"/><circle cx="1677.6" cy="137.8" r="1.8"/><circle cx="1671.3" cy="151.4" r="0.8"/><circle cx="1652.5" cy="175.5" r="1.8"/><circle cx="1736.5" cy="190.5" r="1.8"/><circle cx="1800.7" cy="179.4" r="1.8"/><circle cx="1596.5" cy="191.3" r="0.8"/><circle cx="1617.6" cy="191.3" r="0.8"/><circle cx="1868.5" cy="157.5" r="1.8"/><circle cx="1903.3" cy="143.7" r="0.8"/><circle cx="1575.6" cy="203.2" r="1.8"/><circle cx="1705" cy="209.3" r="0.8"/><circle cx="1706.5" cy="221.5" r="1.8"/><circle cx="1708.3" cy="245.3" r="1.8"/><circle cx="1700.5" cy="259.6" r="1.8"/><circle cx="1691.3" cy="288.2" r="0.8"/><circle cx="1681.8" cy="305.6" r="0.8"/><circle cx="1639.5" cy="319" r="1.8"/><circle cx="1592" cy="332" r="0.8"/><circle cx="1551.3" cy="341.6" r="1.8"/><circle cx="1524.5" cy="355.5" r="0.8"/><circle cx="1381.5" cy="820.5" r="1.8"/><circle cx="1365.4" cy="833.3" r="0.8"/><circle cx="1375.3" cy="858.2" r="1.8"/><circle cx="1363.2" cy="872.3" r="0.8"/></g>
<g fill="#ff0000"><circle cx="1488.4" cy="122.7" r="3"/><circle cx="1798.5" cy="454.4" r="3"/></g>
<g><text x="220.4" y="52.6" class="li">Dingle</text><text x="314.4" y="64.4" class="li">Cill Airne</text><text x="226.6" y="76.3" class="li">Cahersiveen</text><text x="306.7" y="85.5" class="li">Kenmare</text><text x="323.4" y="110.1" class="li">Bantry</text><text x="373.8" y="122.4" class="lr">Derry</text><text x="445.8" y="85.2" class="lb">Cork</text><text x="438" y="107.1" class="li">Kinsale</text><text x="523" y="76.3" class="li">Eochaill</text><text x="551.8" y="59.2" class="li">Dungarvan</text><text x="611" y="50.2" class="li">Trá Mhór</text><text x="937" y="53.1" class="li">Aberporth</text><text x="883.5" y="71.0" class="li">Fishguard</text><text x="846.3" y="85.2" class="li">Saint David<tspan dx="-1.2">´</tspan><tspan dx="-1.6">s</tspan></text><text x="875.7" y="106.3" class="lr">Milford Haven</text><text x="967.7" y="102.9" class="li">Kidwelly</text><text x="1012.6" y="119.1" class="lb">Swansea</text><text x="1042.5" y="135.0" class="lr">Porthcawl</text><text x="1108.6" y="137.0" class="lb">Cardiff</text><text x="991" y="169.0" class="lr">Ilfracombe</text><text x="1070.3" y="169.0" class="lr">Minehead</text><text x="1189.8" y="104.3" class="li">Lydney</text><text x="1161.5" y="122.1" class="lr">Caldicot</text><text x="1159.5" y="135.4" class="lr">Portishead</text><text x="1134" y="152.5" class="lr">Weston-super-Mare</text><text x="1706.2" y="50.9" class="li">Aldeburgh</text><text x="1650.5" y="65.2" class="lb">Ipswich</text><text x="1650.5" y="96.3" class="lr">Clacton-on-Sea</text><text x="1590.6" y="104.3" class="lr">Maldon</text><text x="1608.4" y="116.3" class="li">Burnham on Crouch</text><text x="1595.6" y="130.1" class="lb">Southend-on-Sea</text><text x="1490" y="132.4" class="lc">London</text><text x="1539.4" y="139.0" class="li">Stone</text><text x="1574.5" y="147.9" class="lb">Gillingham</text><text x="1679.6" y="147.4" class="lr">Margate</text><text x="1673.5" y="160.8" class="li">Sandwich</text><text x="1654.7" y="184.9" class="lr">Folkestone</text><text x="1738.7" y="199.4" class="lr">Calais</text><text x="1802.7" y="188.6" class="lr">Dunkerque</text><text x="1598" y="199.6" class="li">Rye</text><text x="1619.4" y="199.6" class="li">Lydd</text><text x="1870.7" y="167.0" class="lr">Oostende</text><text x="1904.4" y="154.2" class="li">Zeebrugge</text><text x="1577.6" y="213.2" class="lr">Hastings</text><text x="1485.7" y="218.8" class="lb">Brighton</text><text x="1707.6" y="218.8" class="li">Ambleteuse</text><text x="1708.3" y="231.3" class="lr">Boulogne-sur-Mer</text><text x="1710.5" y="255.1" class="lr">Étaples</text><text x="1702.3" y="269.0" class="lr">Berck-Plage</text><text x="1693.5" y="298.1" class="li">Cayeux-sur-Mer</text><text x="1684" y="315.0" class="li">Eu</text><text x="1641" y="328.9" class="lr">Dieppe</text><text x="1594.3" y="341.7" class="li">Néville</text><text x="1553.5" y="351.0" class="lr">Fécamp</text><text x="1526.3" y="365.2" class="li">Saint-Jouin-Bruneval</text><text x="1473.6" y="411.3" class="li">Ouistreham</text><text x="1518.5" y="386.3" class="lb">Le Havre</text><text x="1800.7" y="465.3" class="lc">Paris</text><text x="1383.7" y="830.2" class="lr">Rochefort</text><text x="1367.4" y="843.0" class="li">Marennes</text><text x="1377.7" y="868.0" class="lr">Royan</text><text x="1365.4" y="882.1" class="li">Soulac-sur-Mer</text></g>
</svg><svg class="abs" style="left:116px;top:49px" width="68" height="260" viewBox="116 49 68 260">
<defs><linearGradient id="cg" x1="0" y1="0" x2="0" y2="1"><stop offset="0" stop-color="#56a2de"/><stop offset=".5" stop-color="#2060ac"/><stop offset=".5" stop-color="#1a4682"/><stop offset="1" stop-color="#1d4e8e"/></linearGradient>
<linearGradient id="cg2" x1="0" y1="0" x2="0" y2="1"><stop offset="0" stop-color="#2f70b8"/><stop offset=".5" stop-color="#1c58a0"/><stop offset=".5" stop-color="#173f78"/><stop offset="1" stop-color="#1a4684"/></linearGradient>
<linearGradient id="bg3" x1="0" y1="0" x2="0" y2="1"><stop offset="0" stop-color="#3a74b8"/><stop offset=".5" stop-color="#1f509a"/><stop offset=".5" stop-color="#173a74"/><stop offset="1" stop-color="#1b4482"/></linearGradient>
<linearGradient id="tr" x1="0" y1="0" x2="1" y2="0"><stop offset="0" stop-color="#2f6ea8"/><stop offset=".5" stop-color="#62a4d8"/><stop offset="1" stop-color="#2f6ea8"/></linearGradient>
<linearGradient id="kn" x1="0" y1="0" x2="0" y2="1"><stop offset="0" stop-color="#5a9ad4"/><stop offset=".5" stop-color="#2a68aa"/><stop offset=".5" stop-color="#1b4c88"/><stop offset="1" stop-color="#20569a"/></linearGradient></defs>
<circle cx="150" cy="83" r="31" fill="url(#cg)" stroke="#31507c" stroke-width="1"/><circle cx="150" cy="83" r="29.800" fill="none" stroke="#7fb4e4" stroke-width=".800" opacity=".45"/>
<path d="M128.500 61.500 L171.500 104.500 M171.500 61.500 L128.500 104.500" stroke="#173a70" stroke-width="1"/>
<circle cx="150" cy="83" r="17.500" fill="url(#cg2)" stroke="#173a70" stroke-width="1"/>
<path d="M145.500 62.500 L150 57.500 L154.500 62.500Z M145.500 103.500 L150 108.500 L154.500 103.500Z M124.500 83 L129.500 78.500 L129.500 87.500Z M176 83 L171 78.500 L171 87.500Z" fill="#e8eef6"/>
<text x="150.300" y="88.300" text-anchor="middle" font-family="Liberation Sans,sans-serif" font-weight="bold" font-size="13.800" fill="#e4ebf4">1:1</text>
<rect x="140.500" y="131.500" width="20" height="20" rx="3.500" fill="url(#bg3)" stroke="#203a6a"/>
<path d="M144.500 141.500 H156.500 M150.500 135.500 V147.500" stroke="#fff" stroke-width="2.400"/>
<rect x="147" y="160" width="6.500" height="109" rx="3" fill="url(#tr)"/>
<circle cx="150.200" cy="222" r="9.300" fill="url(#kn)"/>
<rect x="140.500" y="281.500" width="20" height="20" rx="3.500" fill="url(#bg3)" stroke="#203a6a"/>
<path d="M144.500 291.500 H156.500" stroke="#fff" stroke-width="2.400"/>
</svg><div id="bottom" class="abs"></div><div id="bblack" class="abs"></div><div class="trk" style="top:928px"></div><div class="cb" style="top:928px"></div><div class="gsr" style="top:931px">G</div><div class="trk" style="top:944px"></div><div class="cb" style="top:944px"></div><div class="gsr" style="top:947px">S</div><div class="trk" style="top:960px"></div><div class="cb" style="top:960px"></div><div class="gsr" style="top:963px">R</div><div id="dashes" class="abs">--- -- - --:--</div><div id="combo" class="abs"><svg class="abs" style="left:204px;top:8px" width="10" height="7" viewBox="0 0 10 7"><path d="M1 1 L5 5 L9 1" fill="none" stroke="#a8a8a8" stroke-width="1.200"/></svg></div><div class="pb" style="left:1285px"><svg width="27" height="26" viewBox="0 -1.200 27 26"><path fill="#e8e8e8" d="M5 7 h2 v12 h-2z M15 7 v12 l-8 -6z M23 7 v12 l-8 -6z"/></svg></div><div class="pb" style="left:1321px"><svg width="27" height="26" viewBox="0 -1.200 27 26"><path fill="#e8e8e8" d="M7 7 h2.500 v12 h-2.500z M20 7 v12 l-10 -6z"/></svg></div><div class="pb" style="left:1357px"><svg width="27" height="26" viewBox="0 -1.200 27 26"><path fill="#e8e8e8" d="M9 6.500 l11 6.500 l-11 6.500z"/></svg></div><div class="pb" style="left:1393px"><svg width="27" height="26" viewBox="0 -1.200 27 26"><path fill="#e8e8e8" d="M17.500 7 h2.500 v12 h-2.500z M7 7 v12 l10 -6z"/></svg></div><div class="pb" style="left:1429px"><svg width="27" height="26" viewBox="0 -1.200 27 26"><path fill="#e8e8e8" d="M20 7 h2 v12 h-2z M4 7 v12 l8 -6z M12 7 v12 l8 -6z"/></svg></div><div class="pb" style="left:1465px"><svg width="27" height="26" viewBox="0 -1.200 27 26"><circle cx="14" cy="13.300" r="9.300" fill="none" stroke="#e0e0e0" stroke-width="1.700"/><path d="M14 13.300 L18.500 9.800 M14 13.300 L10 10.800" stroke="#e0e0e0" stroke-width="1.300" fill="none"/><path d="M3.200 12 l2.600 1.200 M3.400 15 l2.400 -.600" stroke="#e0e0e0" stroke-width="1.100"/></svg></div><div class="btxt" style="left:1503px;top:991px">par</div><div class="btxt" style="left:1538px;top:991px">1</div><div class="abs" style="left:1549px;top:990px;width:16px;height:18px;background:#f0f0f0;border:1px solid #888"><svg class="abs" style="left:0;top:0" width="14" height="16" viewBox="0 0 14 16"><path d="M0 8 H14" stroke="#999"/><path d="M4 6 L7 2.500 L10 6Z M4 10 L7 13.500 L10 10Z" fill="#222"/></svg></div><div class="btxt" style="left:1586px;top:991px">VITESSE</div><svg class="abs" style="left:1656px;top:986px" width="86" height="24" viewBox="0 0 86 24"><rect x="2" y="10.500" width="81" height="3" fill="#e4e4e4"/><path d="M50 3 h9 v13 l-4.500 5 l-4.500 -5z" fill="#cfcfcf" stroke="#aaa" stroke-width=".600"/></svg><div class="btxt" style="left:1759px;top:991px">ZOOM</div><div class="pb" style="left:1810px"><svg width="27" height="26" viewBox="0 0 27 26"><path d="M6.500 13 H20.500 M13.500 6 V20" stroke="#e8e8e8" stroke-width="2.600"/></svg></div><div class="pb" style="left:1847px"><svg width="27" height="26" viewBox="0 0 27 26"><text x="13.500" y="19" text-anchor="middle" font-family="Liberation Sans,sans-serif" font-weight="bold" font-size="14" fill="#e8e8e8">1:1</text></svg></div><div class="pb" style="left:1883px"><svg width="27" height="26" viewBox="0 0 27 26"><path d="M6.500 13 H20.500" stroke="#e8e8e8" stroke-width="2.600"/></svg></div><div id="dlg" class="abs"><div id="title" class="abs"><svg class="abs" style="left:7.500px;top:5px" width="18" height="18" viewBox="0 0 18 18"><path d="M7.300 1.800 L7.800 3.500 L11 11.500 L6.300 11.900 C7 8.500 7.200 5 7.300 1.800Z" fill="#1c78ae"/><path d="M9.400 3.600 L15.600 11 L11.300 11.600 C11 8.800 10.300 6 9.400 3.600Z" fill="#1a6ea6"/><path d="M6 12.400 L15.500 11.700 L15 12.600 L6.500 13.200Z" fill="#1c78ae"/><path d="M1.500 14.600 C5 13 9 14.800 15.800 13.600 C13 16 9 16.800 5 16 C3.500 15.600 2.500 15.200 1.500 14.600Z" fill="#3e9acc" opacity=".85"/><path d="M.800 12.500 l1.600 1 M2.800 11.600 l1.400 1.200 M9 17 l.800 -1" stroke="#4aa2d2" stroke-width=".800" fill="none" opacity=".8"/></svg><span>Requête GRIB - Téléchargement Direct</span><svg class="abs" style="left:989px;top:4px" width="120" height="22" viewBox="1391 181 120 22" fill="none" stroke="#000" stroke-width="1"><path d="M1399 191.500 H1409"/><rect x="1444.500" y="186.500" width="9" height="9"/><path d="M1490.700 186.200 L1500.800 196.300 M1500.800 186.200 L1490.700 196.300" stroke-width="1.100"/></svg></div><div id="strip2" class="abs"></div><div id="tabsel" class="abs"></div><div class="tab" style="left:16px">GribMail</div><div class="tab" style="left:80px">Mode Avancé</div><div class="tab" style="left:172px">Runtimes</div><div id="free" class="abs"><span>Free</span><svg class="abs" style="left:151px;top:10px" width="7" height="4" viewBox="0 0 7 4"><path d="M0.500 0 H6.500 L3.500 3.500Z" fill="#000"/></svg></div><div class="grp" style="left:4px;top:67px;width:263px;height:570px"><b>Variables</b></div><div class="grp" style="left:272px;top:67px;width:637px;height:570px"><b style="letter-spacing:-.2px">Modèles et pas de temps</b></div><div class="grp" style="left:914px;top:67px;width:200px;height:570px"><b>Options</b></div><div class="tile sel" style="left:10px;top:80px"><svg class="tico" width="60.600" height="60.300" viewBox="0 0 61 61" preserveAspectRatio="none"><defs><linearGradient id="tb0" x1="0" y1="0" x2="0" y2="1"><stop offset="0" stop-color="#74bbe8"/><stop offset=".49" stop-color="#2f6db2"/><stop offset=".49" stop-color="#1a3a68"/><stop offset="1" stop-color="#1d4b84"/></linearGradient><clipPath id="tc0"><rect x="0" y="0" width="61" height="61" rx="10"/></clipPath></defs><rect x="0" y="0" width="61" height="61" rx="10" fill="url(#tb0)"/><g clip-path="url(#tc0)"><defs><clipPath id="sk0c"><path d="M11.500 8 C19 7.500 26 11.500 31 15.500 C36 19 42 18 47.500 20.500 C44 23 40 22 36 24 C30 27 22 30.500 13 31.500 C8.500 27 8 13 11.500 8Z"/></clipPath><linearGradient id="skg0" x1="0" y1="0" x2="0" y2="1"><stop offset="0" stop-color="#fff" stop-opacity="0"/><stop offset="1" stop-color="#203050" stop-opacity=".28"/></linearGradient></defs><path d="M11.500 8 C19 7.500 26 11.500 31 15.500 C36 19 42 18 47.500 20.500 C44 23 40 22 36 24 C30 27 22 30.500 13 31.500 C8.500 27 8 13 11.500 8Z" fill="#f6f6f6"/><g clip-path="url(#sk0c)" fill="none" stroke="#e21a1a" stroke-width="2.300"><ellipse cx="13" cy="19.800" rx="3.600" ry="12"/><ellipse cx="19.500" cy="19.600" rx="3.200" ry="11"/><ellipse cx="26" cy="19.700" rx="2.800" ry="9"/><ellipse cx="32" cy="20" rx="2.200" ry="6.500"/><ellipse cx="37.300" cy="20.400" rx="1.700" ry="4.300"/><ellipse cx="42" cy="20.700" rx="1.300" ry="3"/><ellipse cx="46" cy="20.800" rx="1" ry="2"/></g><path d="M11.500 8 C19 7.500 26 11.500 31 15.500 C36 19 42 18 47.500 20.500 C44 23 40 22 36 24 C30 27 22 30.500 13 31.500 C8.500 27 8 13 11.500 8Z" fill="url(#skg0)"/><ellipse cx="26" cy="50.800" rx="16" ry="1" fill="#0c2244" opacity=".55"/><rect x="10" y="6.500" width="2.600" height="44.500" rx="1.200" fill="#b4b4b4"/><rect x="10.600" y="6.500" width="1" height="44.500" fill="#e6e6e6"/></g><circle cx="50.500" cy="50" r="8" fill="#12c812" stroke="#0a9a0a" stroke-width=".800"/><path d="M45.800 50.300 L49.200 53.900 L55.400 45.900" fill="none" stroke="#fff" stroke-width="2.6" stroke-linecap="round" stroke-linejoin="round"/></svg><div class="tl">Vent</div></div>
<div class="tile" style="left:89px;top:80px"><svg class="tico" width="60.600" height="60.300" viewBox="0 0 61 61" preserveAspectRatio="none"><defs><linearGradient id="tb1" x1="0" y1="0" x2="0" y2="1"><stop offset="0" stop-color="#74bbe8"/><stop offset=".49" stop-color="#2f6db2"/><stop offset=".49" stop-color="#1a3a68"/><stop offset="1" stop-color="#1d4b84"/></linearGradient><clipPath id="tc1"><rect x="0" y="0" width="61" height="61" rx="10"/></clipPath></defs><rect x="0" y="0" width="61" height="61" rx="10" fill="url(#tb1)"/><g clip-path="url(#tc1)"><defs><clipPath id="sk1c"><path d="M11.500 8 C19 7.500 26 11.500 31 15.500 C36 19 42 18 47.500 20.500 C44 23 40 22 36 24 C30 27 22 30.500 13 31.500 C8.500 27 8 13 11.500 8Z"/></clipPath><linearGradient id="skg1" x1="0" y1="0" x2="0" y2="1"><stop offset="0" stop-color="#fff" stop-opacity="0"/><stop offset="1" stop-color="#203050" stop-opacity=".28"/></linearGradient></defs><path d="M11.500 8 C19 7.500 26 11.500 31 15.500 C36 19 42 18 47.500 20.500 C44 23 40 22 36 24 C30 27 22 30.500 13 31.500 C8.500 27 8 13 11.500 8Z" fill="#f6f6f6"/><g clip-path="url(#sk1c)" fill="none" stroke="#e21a1a" stroke-width="2.300"><ellipse cx="13" cy="19.800" rx="3.600" ry="12"/><ellipse cx="19.500" cy="19.600" rx="3.200" ry="11"/><ellipse cx="26" cy="19.700" rx="2.800" ry="9"/><ellipse cx="32" cy="20" rx="2.200" ry="6.500"/><ellipse cx="37.300" cy="20.400" rx="1.700" ry="4.300"/><ellipse cx="42" cy="20.700" rx="1.300" ry="3"/><ellipse cx="46" cy="20.800" rx="1" ry="2"/></g><path d="M11.500 8 C19 7.500 26 11.500 31 15.500 C36 19 42 18 47.500 20.500 C44 23 40 22 36 24 C30 27 22 30.500 13 31.500 C8.500 27 8 13 11.500 8Z" fill="url(#skg1)"/><ellipse cx="26" cy="50.800" rx="16" ry="1" fill="#0c2244" opacity=".55"/><rect x="10" y="6.500" width="2.600" height="44.500" rx="1.200" fill="#b4b4b4"/><rect x="10.600" y="6.500" width="1" height="44.500" fill="#e6e6e6"/><text x="15.800" y="51.300" font-family="Liberation Sans,sans-serif" font-size="12" fill="#f0f0f0" textLength="41" lengthAdjust="spacingAndGlyphs">925hPa</text></g></svg><div class="tl two">Vent à<br>925hPa</div></div>
<div class="tile sel" style="left:168px;top:80px"><svg class="tico" width="60.600" height="60.300" viewBox="0 0 61 61" preserveAspectRatio="none"><defs><linearGradient id="tb2" x1="0" y1="0" x2="0" y2="1"><stop offset="0" stop-color="#74bbe8"/><stop offset=".49" stop-color="#2f6db2"/><stop offset=".49" stop-color="#1a3a68"/><stop offset="1" stop-color="#1d4b84"/></linearGradient><clipPath id="tc2"><rect x="0" y="0" width="61" height="61" rx="10"/></clipPath></defs><rect x="0" y="0" width="61" height="61" rx="10" fill="url(#tb2)"/><g clip-path="url(#tc2)"><defs><clipPath id="sk2c"><path d="M11.500 8 C19 7.500 26 11.500 31 15.500 C36 19 42 18 47.500 20.500 C44 23 40 22 36 24 C30 27 22 30.500 13 31.500 C8.500 27 8 13 11.500 8Z"/></clipPath><linearGradient id="skg2" x1="0" y1="0" x2="0" y2="1"><stop offset="0" stop-color="#fff" stop-opacity="0"/><stop offset="1" stop-color="#203050" stop-opacity=".28"/></linearGradient></defs><path d="M11.500 8 C19 7.500 26 11.500 31 15.500 C36 19 42 18 47.500 20.500 C44 23 40 22 36 24 C30 27 22 30.500 13 31.500 C8.500 27 8 13 11.500 8Z" fill="#f6f6f6"/><g clip-path="url(#sk2c)" fill="none" stroke="#e21a1a" stroke-width="2.300"><ellipse cx="13" cy="19.800" rx="3.600" ry="12"/><ellipse cx="19.500" cy="19.600" rx="3.200" ry="11"/><ellipse cx="26" cy="19.700" rx="2.800" ry="9"/><ellipse cx="32" cy="20" rx="2.200" ry="6.500"/><ellipse cx="37.300" cy="20.400" rx="1.700" ry="4.300"/><ellipse cx="42" cy="20.700" rx="1.300" ry="3"/><ellipse cx="46" cy="20.800" rx="1" ry="2"/></g><path d="M11.500 8 C19 7.500 26 11.500 31 15.500 C36 19 42 18 47.500 20.500 C44 23 40 22 36 24 C30 27 22 30.500 13 31.500 C8.500 27 8 13 11.500 8Z" fill="url(#skg2)"/><ellipse cx="26" cy="50.800" rx="16" ry="1" fill="#0c2244" opacity=".55"/><rect x="10" y="6.500" width="2.600" height="44.500" rx="1.200" fill="#b4b4b4"/><rect x="10.600" y="6.500" width="1" height="44.500" fill="#e6e6e6"/><g fill="#e8eef4"><path d="M36 33.500 L52 31.500 L52 33.800Z"/><path d="M24 41 L52 37.500 L53 40.500Z"/><path d="M38 47 L50 45.500 L50 47.500Z"/></g></g><circle cx="50.500" cy="50" r="8" fill="#12c812" stroke="#0a9a0a" stroke-width=".800"/><path d="M45.800 50.300 L49.200 53.900 L55.400 45.900" fill="none" stroke="#fff" stroke-width="2.6" stroke-linecap="round" stroke-linejoin="round"/></svg><div class="tl two">Rafales de<br>vent</div></div>
<div class="tile sel" style="left:10px;top:186px"><svg class="tico" width="60.600" height="60.300" viewBox="0 0 61 61" preserveAspectRatio="none"><defs><linearGradient id="tb3" x1="0" y1="0" x2="0" y2="1"><stop offset="0" stop-color="#74bbe8"/><stop offset=".49" stop-color="#2f6db2"/><stop offset=".49" stop-color="#1a3a68"/><stop offset="1" stop-color="#1d4b84"/></linearGradient><clipPath id="tc3"><rect x="0" y="0" width="61" height="61" rx="10"/></clipPath></defs><rect x="0" y="0" width="61" height="61" rx="10" fill="url(#tb3)"/><g clip-path="url(#tc3)"><defs><radialGradient id="pfw" cx=".38" cy=".32" r=".75"><stop offset="0" stop-color="#ffffff"/><stop offset=".5" stop-color="#e2ebf2"/><stop offset=".82" stop-color="#b8ccdc"/><stop offset="1" stop-color="#8ea8c0"/></radialGradient><radialGradient id="pfg" cx=".35" cy=".3" r=".8"><stop offset="0" stop-color="#e8eef2"/><stop offset=".55" stop-color="#c8d4de"/><stop offset="1" stop-color="#8a9eb0"/></radialGradient></defs><g transform="translate(0 2.300)"><ellipse cx="31" cy="33" rx="20" ry="5.500" fill="#a0b6c8"/><circle cx="46.2" cy="24.5" r="8.6" fill="url(#pfg)"/><circle cx="46" cy="31" r="7.2" fill="url(#pfg)"/><circle cx="32.8" cy="18.2" r="7.6" fill="url(#pfw)"/><circle cx="21.2" cy="21" r="6.6" fill="url(#pfw)"/><circle cx="9.8" cy="26.6" r="4.2" fill="url(#pfw)"/><circle cx="40" cy="22" r="6.5" fill="url(#pfw)"/><circle cx="32" cy="25" r="8" fill="url(#pfw)"/><circle cx="16.6" cy="29.5" r="6.6" fill="url(#pfw)"/><circle cx="35.3" cy="30.6" r="6.6" fill="url(#pfw)"/><circle cx="24.8" cy="31.4" r="5.2" fill="url(#pfw)"/><circle cx="41.5" cy="31.5" r="5" fill="url(#pfg)"/></g></g><circle cx="50.500" cy="50" r="8" fill="#12c812" stroke="#0a9a0a" stroke-width=".800"/><path d="M45.800 50.300 L49.200 53.900 L55.400 45.900" fill="none" stroke="#fff" stroke-width="2.6" stroke-linecap="round" stroke-linejoin="round"/></svg><div class="tl two">Couverture<br>nuageuse</div></div>
<div class="tile sel" style="left:89px;top:186px"><svg class="tico" width="60.600" height="60.300" viewBox="0 0 61 61" preserveAspectRatio="none"><defs><linearGradient id="tb4" x1="0" y1="0" x2="0" y2="1"><stop offset="0" stop-color="#74bbe8"/><stop offset=".49" stop-color="#2f6db2"/><stop offset=".49" stop-color="#1a3a68"/><stop offset="1" stop-color="#1d4b84"/></linearGradient><clipPath id="tc4"><rect x="0" y="0" width="61" height="61" rx="10"/></clipPath></defs><rect x="0" y="0" width="61" height="61" rx="10" fill="url(#tb4)"/><g clip-path="url(#tc4)"><defs><radialGradient id="pfw" cx=".38" cy=".32" r=".75"><stop offset="0" stop-color="#ffffff"/><stop offset=".5" stop-color="#e2ebf2"/><stop offset=".82" stop-color="#b8ccdc"/><stop offset="1" stop-color="#8ea8c0"/></radialGradient><radialGradient id="pfg" cx=".35" cy=".3" r=".8"><stop offset="0" stop-color="#e8eef2"/><stop offset=".55" stop-color="#c8d4de"/><stop offset="1" stop-color="#8a9eb0"/></radialGradient></defs><g transform="translate(0 2.300)"><ellipse cx="31" cy="33" rx="20" ry="5.500" fill="#a0b6c8"/><circle cx="46.2" cy="24.5" r="8.6" fill="url(#pfg)"/><circle cx="46" cy="31" r="7.2" fill="url(#pfg)"/><circle cx="32.8" cy="18.2" r="7.6" fill="url(#pfw)"/><circle cx="21.2" cy="21" r="6.6" fill="url(#pfw)"/><circle cx="9.8" cy="26.6" r="4.2" fill="url(#pfw)"/><circle cx="40" cy="22" r="6.5" fill="url(#pfw)"/><circle cx="32" cy="25" r="8" fill="url(#pfw)"/><circle cx="16.6" cy="29.5" r="6.6" fill="url(#pfw)"/><circle cx="35.3" cy="30.6" r="6.6" fill="url(#pfw)"/><circle cx="24.8" cy="31.4" r="5.2" fill="url(#pfw)"/><circle cx="41.5" cy="31.5" r="5" fill="url(#pfg)"/></g><g fill="#d4e6f2"><path d="M13.5 37.5 l1.100 2.800 a1.150 1.150 0 1 1 -1.900 .300z"/><path d="M20.5 39.5 l1.100 2.800 a1.150 1.150 0 1 1 -1.900 .300z"/><path d="M26.5 40 l1.100 2.800 a1.150 1.150 0 1 1 -1.900 .300z"/><path d="M37.5 40 l1.100 2.800 a1.150 1.150 0 1 1 -1.900 .300z"/><path d="M44 39 l1.100 2.800 a1.150 1.150 0 1 1 -1.900 .300z"/><path d="M48 37.5 l1.100 2.800 a1.150 1.150 0 1 1 -1.900 .300z"/><path d="M15.5 44.5 l1.100 2.800 a1.150 1.150 0 1 1 -1.900 .300z"/><path d="M19.5 46 l1.100 2.800 a1.150 1.150 0 1 1 -1.900 .300z"/><path d="M24 46.5 l1.100 2.800 a1.150 1.150 0 1 1 -1.900 .300z"/><path d="M32 43 l1.100 2.800 a1.150 1.150 0 1 1 -1.900 .300z"/><path d="M36.5 47 l1.100 2.800 a1.150 1.150 0 1 1 -1.900 .300z"/><path d="M41.5 45.5 l1.100 2.800 a1.150 1.150 0 1 1 -1.900 .300z"/><path d="M28.5 50.5 l1.100 2.800 a1.150 1.150 0 1 1 -1.900 .300z"/><path d="M33 51 l1.100 2.800 a1.150 1.150 0 1 1 -1.900 .300z"/><path d="M40.5 52.5 l1.100 2.800 a1.150 1.150 0 1 1 -1.900 .300z"/><path d="M23.5 52 l1.100 2.800 a1.150 1.150 0 1 1 -1.900 .300z"/></g><g fill="#c0d8ea"><circle cx="17.5" cy="41" r=".550"/><circle cx="30" cy="41.5" r=".550"/><circle cx="41" cy="41.5" r=".550"/><circle cx="27" cy="47.5" r=".550"/><circle cx="44.5" cy="48.5" r=".550"/><circle cx="21.5" cy="49.5" r=".550"/><circle cx="36.5" cy="53.5" r=".550"/></g></g><circle cx="50.500" cy="50" r="8" fill="#12c812" stroke="#0a9a0a" stroke-width=".800"/><path d="M45.800 50.300 L49.200 53.900 L55.400 45.900" fill="none" stroke="#fff" stroke-width="2.6" stroke-linecap="round" stroke-linejoin="round"/></svg><div class="tl">Précipitations</div></div>
<div class="tile sel" style="left:168px;top:186px"><svg class="tico" width="60.600" height="60.300" viewBox="0 0 61 61" preserveAspectRatio="none"><defs><linearGradient id="tb5" x1="0" y1="0" x2="0" y2="1"><stop offset="0" stop-color="#74bbe8"/><stop offset=".49" stop-color="#2f6db2"/><stop offset=".49" stop-color="#1a3a68"/><stop offset="1" stop-color="#1d4b84"/></linearGradient><clipPath id="tc5"><rect x="0" y="0" width="61" height="61" rx="10"/></clipPath></defs><rect x="0" y="0" width="61" height="61" rx="10" fill="url(#tb5)"/><g clip-path="url(#tc5)"><defs><linearGradient id="dg" x1="0" y1="0" x2="0" y2="1"><stop offset="0" stop-color="#7aa6c4"/><stop offset=".45" stop-color="#a4cce0"/><stop offset=".46" stop-color="#86b8d6"/><stop offset="1" stop-color="#b6e0f4"/></linearGradient></defs><path d="M30 11 C32 20 42 28 42 37 A12 12 0 0 1 18 37 C18 28 28 20 30 11Z" fill="url(#dg)"/></g><circle cx="50.500" cy="50" r="8" fill="#12c812" stroke="#0a9a0a" stroke-width=".800"/><path d="M45.800 50.300 L49.200 53.900 L55.400 45.900" fill="none" stroke="#fff" stroke-width="2.6" stroke-linecap="round" stroke-linejoin="round"/></svg><div class="tl">Humidité</div></div>
<div class="tile" style="left:10px;top:292px"><svg class="tico" width="60.600" height="60.300" viewBox="0 0 61 61" preserveAspectRatio="none"><defs><linearGradient id="tb6" x1="0" y1="0" x2="0" y2="1"><stop offset="0" stop-color="#a6a6a6"/><stop offset=".49" stop-color="#787878"/><stop offset=".49" stop-color="#6e6e6e"/><stop offset="1" stop-color="#505050"/></linearGradient><clipPath id="tc6"><rect x="0" y="0" width="61" height="61" rx="10"/></clipPath></defs><rect x="0" y="0" width="61" height="61" rx="10" fill="url(#tb6)"/><g clip-path="url(#tc6)"><defs><linearGradient id="wv6" x1="0" y1="0" x2="0" y2="1"><stop offset="0" stop-color="#fff" stop-opacity=".34"/><stop offset="1" stop-color="#fff" stop-opacity="0"/></linearGradient></defs><path d="M0 27 C8 21 14 21 20 23 C26 17 31 13 38 15 C35 16 34 19 36 21 C42 25 52 21 61 22 V42 H0Z" fill="url(#wv6)"/><circle cx="35.500" cy="16" r="1.300" fill="#ddd" opacity=".8"/><circle cx="38.500" cy="19" r=".900" fill="#ddd" opacity=".8"/><path d="M0 36 C10 30 18 36 26 37 C36 38 44 29 52 29 C56 29 59 31 61 30 V52 H0Z" fill="url(#wv6)"/><circle cx="18.500" cy="41.500" r="13.200" fill="#4e4e4e" stroke="#e4e4e4" stroke-width="1.500"/><g fill="#f0f0f0" font-family="Liberation Sans,sans-serif" font-weight="bold" font-size="6.500" text-anchor="middle"><text x="18.500" y="34.800">N</text><text x="18.500" y="53">S</text><text x="9.700" y="44">W</text><text x="27.800" y="44">E</text></g><g fill="#ddd"><circle cx="12" cy="35" r=".600"/><circle cx="25" cy="35" r=".600"/><circle cx="12" cy="48" r=".600"/><circle cx="25" cy="48" r=".600"/></g><path d="M22 35.500 L20 44 L16 49 L17 41Z" fill="#fff"/><path d="M20 44 L16 49 L16.500 46Z" fill="#222"/></g></svg><div class="tl two">Direction des<br>vagues</div></div>
<div class="tile" style="left:89px;top:292px"><svg class="tico" width="60.600" height="60.300" viewBox="0 0 61 61" preserveAspectRatio="none"><defs><linearGradient id="tb7" x1="0" y1="0" x2="0" y2="1"><stop offset="0" stop-color="#a6a6a6"/><stop offset=".49" stop-color="#787878"/><stop offset=".49" stop-color="#6e6e6e"/><stop offset="1" stop-color="#505050"/></linearGradient><clipPath id="tc7"><rect x="0" y="0" width="61" height="61" rx="10"/></clipPath></defs><rect x="0" y="0" width="61" height="61" rx="10" fill="url(#tb7)"/><g clip-path="url(#tc7)"><defs><linearGradient id="wv7" x1="0" y1="0" x2="0" y2="1"><stop offset="0" stop-color="#fff" stop-opacity=".34"/><stop offset="1" stop-color="#fff" stop-opacity="0"/></linearGradient></defs><path d="M0 26 C8 20 16 20 24 24 C32 28 38 27 46 23 C52 20 57 21 61 22 V42 H0Z" fill="url(#wv7)"/><path d="M0 36 C10 30 18 35 26 37 C36 39 44 31 52 30 C56 30 59 32 61 31 V52 H0Z" fill="url(#wv7)"/><circle cx="18.500" cy="41.500" r="13.200" fill="#4e4e4e" stroke="#e4e4e4" stroke-width="1.500"/><g fill="#f0f0f0" font-family="Liberation Sans,sans-serif" font-weight="bold" font-size="6.500" text-anchor="middle"><text x="18.500" y="34.800">N</text><text x="18.500" y="53">S</text><text x="9.700" y="44">W</text><text x="27.800" y="44">E</text></g><g fill="#ddd"><circle cx="12" cy="35" r=".600"/><circle cx="25" cy="35" r=".600"/><circle cx="12" cy="48" r=".600"/><circle cx="25" cy="48" r=".600"/></g><path d="M22 35.500 L20 44 L16 49 L17 41Z" fill="#fff"/><path d="M20 44 L16 49 L16.500 46Z" fill="#222"/></g></svg><div class="tl two">Direction de<br>la houle</div></div>
<div class="tile" style="left:168px;top:292px"><svg class="tico" width="60.600" height="60.300" viewBox="0 0 61 61" preserveAspectRatio="none"><defs><linearGradient id="tb8" x1="0" y1="0" x2="0" y2="1"><stop offset="0" stop-color="#a6a6a6"/><stop offset=".49" stop-color="#787878"/><stop offset=".49" stop-color="#6e6e6e"/><stop offset="1" stop-color="#505050"/></linearGradient><clipPath id="tc8"><rect x="0" y="0" width="61" height="61" rx="10"/></clipPath></defs><rect x="0" y="0" width="61" height="61" rx="10" fill="url(#tb8)"/><g clip-path="url(#tc8)"><defs><linearGradient id="wv8" x1="0" y1="0" x2="0" y2="1"><stop offset="0" stop-color="#fff" stop-opacity=".34"/><stop offset="1" stop-color="#fff" stop-opacity="0"/></linearGradient></defs><path d="M0 26 C8 20 16 20 24 24 C32 28 38 27 46 23 C52 20 57 21 61 22 V42 H0Z" fill="url(#wv8)"/><path d="M0 36 C10 30 18 35 26 37 C36 39 44 31 52 30 C56 30 59 32 61 31 V52 H0Z" fill="url(#wv8)"/><rect x="13.500" y="22" width="7" height="34" fill="#2a2a2a" stroke="#8a8a8a" stroke-width=".800"/><g fill="#d0d0d0"><rect x="17" y="23" width="3" height="5"/><rect x="14" y="28" width="3" height="5"/><rect x="17" y="33" width="3" height="5"/><rect x="14" y="38" width="3" height="5"/><rect x="17" y="43" width="3" height="5"/><rect x="14" y="48" width="3" height="5"/></g></g></svg><div class="tl two">Hauteur des<br>vagues</div></div>
<div class="tile" style="left:10px;top:398px"><svg class="tico" width="60.600" height="60.300" viewBox="0 0 61 61" preserveAspectRatio="none"><defs><linearGradient id="tb9" x1="0" y1="0" x2="0" y2="1"><stop offset="0" stop-color="#a6a6a6"/><stop offset=".49" stop-color="#787878"/><stop offset=".49" stop-color="#6e6e6e"/><stop offset="1" stop-color="#505050"/></linearGradient><clipPath id="tc9"><rect x="0" y="0" width="61" height="61" rx="10"/></clipPath></defs><rect x="0" y="0" width="61" height="61" rx="10" fill="url(#tb9)"/><g clip-path="url(#tc9)"><defs><linearGradient id="cur1" x1="0" y1="0" x2="0" y2="1"><stop offset="0" stop-color="#e8e8e8" stop-opacity=".9"/><stop offset="1" stop-color="#aaa" stop-opacity=".2"/></linearGradient><linearGradient id="cur2" x1="0" y1="0" x2="0" y2="1"><stop offset="0" stop-color="#c8c8c8"/><stop offset="1" stop-color="#858585"/></linearGradient></defs><path d="M0 23 C14 20 24 25 36 21 C46 18 54 19 61 20 V30 H0Z" fill="url(#cur1)"/><path d="M20.500 37.500 H32 V33 L42 41 L32 49 V44.500 H20.500Z" fill="url(#cur2)" stroke="#777" stroke-width=".500"/></g></svg><div class="tl">Courants</div></div>
<div class="tile" style="left:89px;top:398px"><svg class="tico" width="60.600" height="60.300" viewBox="0 0 61 61" preserveAspectRatio="none"><defs><linearGradient id="tb10" x1="0" y1="0" x2="0" y2="1"><stop offset="0" stop-color="#74bbe8"/><stop offset=".49" stop-color="#2f6db2"/><stop offset=".49" stop-color="#1a3a68"/><stop offset="1" stop-color="#1d4b84"/></linearGradient><clipPath id="tc10"><rect x="0" y="0" width="61" height="61" rx="10"/></clipPath></defs><rect x="0" y="0" width="61" height="61" rx="10" fill="url(#tb10)"/><g clip-path="url(#tc10)"><defs><linearGradient id="sstg" x1="0" y1="0" x2="0" y2="1"><stop offset="0" stop-color="#5cbede"/><stop offset=".5" stop-color="#2a86b8"/><stop offset="1" stop-color="#1b5490"/></linearGradient></defs><path d="M0 27 C10 24 24 28 36 25 C46 22.500 54 24.500 61 23.500 V61 H0Z" fill="url(#sstg)"/><path d="M0 27 C10 24 24 28 36 25 C46 22.500 54 24.500 61 23.500 V27 C50 28.500 40 30 28 29 C18 28.500 8 28 0 29.500Z" fill="#e8f6fc" opacity=".85"/><rect x="9.500" y="8.500" width="15.500" height="38.500" rx="7.700" fill="#c4c8d2" stroke="#4a5468" stroke-width=".900"/><rect x="14.800" y="12.500" width="4.600" height="24" rx="2.300" fill="#fff"/><rect x="15.300" y="20" width="3.600" height="16" fill="#ee2a2a"/><circle cx="17.100" cy="36.500" r="5.600" fill="#e82020"/><circle cx="15.500" cy="34.800" r="1.700" fill="#ff9a9a"/></g></svg><div class="tl two">Température<br>de surface</div></div>
<div class="tile sel" style="left:168px;top:398px"><svg class="tico" width="60.600" height="60.300" viewBox="0 0 61 61" preserveAspectRatio="none"><defs><linearGradient id="tb11" x1="0" y1="0" x2="0" y2="1"><stop offset="0" stop-color="#74bbe8"/><stop offset=".49" stop-color="#2f6db2"/><stop offset=".49" stop-color="#1a3a68"/><stop offset="1" stop-color="#1d4b84"/></linearGradient><clipPath id="tc11"><rect x="0" y="0" width="61" height="61" rx="10"/></clipPath></defs><rect x="0" y="0" width="61" height="61" rx="10" fill="url(#tb11)"/><g clip-path="url(#tc11)"><rect x="15" y="9" width="7.500" height="33" rx="3.700" fill="#f4f4f4"/><rect x="16.600" y="23" width="4.300" height="18" fill="#38acf6"/><circle cx="18.750" cy="42.500" r="8.500" fill="#2aa4f4"/><circle cx="16.300" cy="40" r="3" fill="#a8dcff" opacity=".9"/><rect x="38.800" y="9" width="7.500" height="33" rx="3.700" fill="#f4f4f4"/><rect x="40.400" y="14.500" width="4.300" height="27" fill="#ee2222"/><circle cx="42.500" cy="42.500" r="8.500" fill="#ec1c1c"/><circle cx="40" cy="40" r="3" fill="#ff9c9c" opacity=".9"/></g><circle cx="50.500" cy="50" r="8" fill="#12c812" stroke="#0a9a0a" stroke-width=".800"/><path d="M45.800 50.300 L49.200 53.900 L55.400 45.900" fill="none" stroke="#fff" stroke-width="2.6" stroke-linecap="round" stroke-linejoin="round"/></svg><div class="tl">Température</div></div>
<div class="tile sel" style="left:10px;top:504px"><svg class="tico" width="60.600" height="60.300" viewBox="0 0 61 61" preserveAspectRatio="none"><defs><linearGradient id="tb12" x1="0" y1="0" x2="0" y2="1"><stop offset="0" stop-color="#74bbe8"/><stop offset=".49" stop-color="#2f6db2"/><stop offset=".49" stop-color="#1a3a68"/><stop offset="1" stop-color="#1d4b84"/></linearGradient><clipPath id="tc12"><rect x="0" y="0" width="61" height="61" rx="10"/></clipPath></defs><rect x="0" y="0" width="61" height="61" rx="10" fill="url(#tb12)"/><g clip-path="url(#tc12)"><defs><radialGradient id="bg1" cx=".5" cy=".5" r=".5"><stop offset=".72" stop-color="#7db4dc"/><stop offset=".86" stop-color="#3a78b0"/><stop offset="1" stop-color="#9cc8e8"/></radialGradient><radialGradient id="bg2" cx=".4" cy=".35" r=".8"><stop offset="0" stop-color="#ffffff"/><stop offset="1" stop-color="#d8d8d8"/></radialGradient><radialGradient id="bg3h" cx=".4" cy=".35" r=".7"><stop offset="0" stop-color="#d8ecfa"/><stop offset="1" stop-color="#4a88c0"/></radialGradient></defs><circle cx="30.100" cy="30.400" r="21.300" fill="url(#bg1)"/><circle cx="30.100" cy="30.400" r="16.600" fill="url(#bg2)" stroke="#9ab0c4" stroke-width=".600"/><g stroke="#aaa" stroke-width=".500"><path d="M30.100 15.500 v2.500 M15.200 30.400 h2.500 M45 30.400 h-2.500 M19.600 19.900 l1.600 1.600 M40.600 19.900 l-1.600 1.600"/></g><path d="M21.500 18 L30.100 30.400" stroke="#111" stroke-width="1.300" stroke-linecap="round" fill="none"/><path d="M30.100 30.400 L37.600 42.900" stroke="#111" stroke-width="2.800" stroke-linecap="butt" fill="none"/><path d="M31 29 L38.600 19" stroke="#e02020" stroke-width="1"/><circle cx="30.200" cy="30.500" r="5.400" fill="url(#bg3h)" stroke="#b8d0e4" stroke-width=".600"/></g><circle cx="50.500" cy="50" r="8" fill="#12c812" stroke="#0a9a0a" stroke-width=".800"/><path d="M45.800 50.300 L49.200 53.900 L55.400 45.900" fill="none" stroke="#fff" stroke-width="2.6" stroke-linecap="round" stroke-linejoin="round"/></svg><div class="tl">Pression</div></div>
<div class="tile sel" style="left:89px;top:504px"><svg class="tico" width="60.600" height="60.300" viewBox="0 0 61 61" preserveAspectRatio="none"><defs><linearGradient id="tb13" x1="0" y1="0" x2="0" y2="1"><stop offset="0" stop-color="#74bbe8"/><stop offset=".49" stop-color="#2f6db2"/><stop offset=".49" stop-color="#1a3a68"/><stop offset="1" stop-color="#1d4b84"/></linearGradient><clipPath id="tc13"><rect x="0" y="0" width="61" height="61" rx="10"/></clipPath></defs><rect x="0" y="0" width="61" height="61" rx="10" fill="url(#tb13)"/><g clip-path="url(#tc13)"><defs><linearGradient id="blt" x1="0" y1="0" x2="1" y2="1"><stop offset="0" stop-color="#ffe860"/><stop offset=".5" stop-color="#fcc02a"/><stop offset="1" stop-color="#f08a08"/></linearGradient></defs><path d="M24.500 12.600 L39.800 12.600 L34.300 23.100 L38.100 23.100 L32.500 33.100 L36.600 32.200 L21.500 50.200 L26.900 34.800 L22.300 35.600 L25.200 26.100 L20.500 26.800Z" fill="url(#blt)" stroke="#d88408" stroke-width=".700" stroke-linejoin="round"/><path d="M26 14 L36 14 L31 23.500 L27 24.500Z" fill="#fff6a0" opacity=".55"/></g><circle cx="50.500" cy="50" r="8" fill="#12c812" stroke="#0a9a0a" stroke-width=".800"/><path d="M45.800 50.300 L49.200 53.900 L55.400 45.900" fill="none" stroke="#fff" stroke-width="2.6" stroke-linecap="round" stroke-linejoin="round"/></svg><div class="tl">CAPE</div></div><div class="abs" style="left:273px;top:76px;width:635px;height:560px;overflow:hidden"><div class="abs" style="left:-273px;top:-76px;width:1118px;height:642px"><div class="hd" style="top:88px">Atmosphère</div><div class="row" style="top:103px"><span class="n">Arome 0.025°</span><span class="r">0.025°</span><span class="d">2 jours</span><div class="tg off"><i></i><b>OFF</b></div><div class="sel2"><span>1 h</span><svg width="9" height="6" viewBox="0 0 9 6"><path d="M.500 .800 L4.500 4.800 L8.500 .800" fill="none" stroke="#222" stroke-width="1.100"/></svg></div></div><div class="row" style="top:131px"><span class="n">Arpege 0.1°</span><span class="r">0.1°</span><span class="d">4 jours</span><div class="tg off"><i></i><b>OFF</b></div><div class="sel2"><span>1 h</span><svg width="9" height="6" viewBox="0 0 9 6"><path d="M.500 .800 L4.500 4.800 L8.500 .800" fill="none" stroke="#222" stroke-width="1.100"/></svg></div></div><div class="row" style="top:159px"><span class="n">Arpege 0.5°</span><span class="r">0.5°</span><span class="d">4 jours</span><div class="tg on"><i></i><b>ON</b></div><div class="sel2"><span>3 h</span><svg width="9" height="6" viewBox="0 0 9 6"><path d="M.500 .800 L4.500 4.800 L8.500 .800" fill="none" stroke="#222" stroke-width="1.100"/></svg></div></div><div class="row dis" style="top:187px"><span class="n">CEP 0.125°</span><span class="r">0.125°</span><span class="d">10 jours</span><div class="tg dis"><i></i><b>OFF</b></div><div class="sel2 dis"><span>3 h</span><svg width="9" height="6" viewBox="0 0 9 6"><path d="M.500 .800 L4.500 4.800 L8.500 .800" fill="none" stroke="#9a9a9a" stroke-width="1.100"/></svg></div></div><div class="row dis" style="top:215px"><span class="n">CEP 0.25°</span><span class="r">0.25°</span><span class="d">10 jours</span><div class="tg dis"><i></i><b>OFF</b></div><div class="sel2 dis"><span>3 h</span><svg width="9" height="6" viewBox="0 0 9 6"><path d="M.500 .800 L4.500 4.800 L8.500 .800" fill="none" stroke="#9a9a9a" stroke-width="1.100"/></svg></div></div><div class="row dis" style="top:243px"><span class="n">CEP 0.5°</span><span class="r">0.5°</span><span class="d">10 jours</span><div class="tg dis"><i></i><b>OFF</b></div><div class="sel2 dis"><span>3 h</span><svg width="9" height="6" viewBox="0 0 9 6"><path d="M.500 .800 L4.500 4.800 L8.500 .800" fill="none" stroke="#9a9a9a" stroke-width="1.100"/></svg></div></div><div class="row dis" style="top:271px"><span class="n">CEP 1.0°</span><span class="r">1.0°</span><span class="d">10 jours</span><div class="tg dis"><i></i><b>OFF</b></div><div class="sel2 dis"><span>3 h</span><svg width="9" height="6" viewBox="0 0 9 6"><path d="M.500 .800 L4.500 4.800 L8.500 .800" fill="none" stroke="#9a9a9a" stroke-width="1.100"/></svg></div></div><div class="row dis" style="top:299px"><span class="n">CEP Hirlam</span><span class="r">0.1°</span><span class="d">2 jours</span><div class="tg dis"><i></i><b>OFF</b></div><div class="sel2 dis"><span>1 h</span><svg width="9" height="6" viewBox="0 0 9 6"><path d="M.500 .800 L4.500 4.800 L8.500 .800" fill="none" stroke="#9a9a9a" stroke-width="1.100"/></svg></div></div><div class="row dis" style="top:327px"><span class="n">GCWF</span><span class="r">0.1°</span><span class="d">4 jours</span><div class="tg dis"><i></i><b>OFF</b></div><div class="sel2 dis"><span>1 h</span><svg width="9" height="6" viewBox="0 0 9 6"><path d="M.500 .800 L4.500 4.800 L8.500 .800" fill="none" stroke="#9a9a9a" stroke-width="1.100"/></svg></div></div><div class="row dis" style="top:355px"><span class="n">GCWF +</span><span class="r">0.0333°</span><span class="d">4 jours</span><div class="tg dis"><i></i><b>OFF</b></div><div class="sel2 dis"><span>1 h</span><svg width="9" height="6" viewBox="0 0 9 6"><path d="M.500 .800 L4.500 4.800 L8.500 .800" fill="none" stroke="#9a9a9a" stroke-width="1.100"/></svg></div></div><div class="row dis" style="top:383px"><span class="n">GCWF Ultra</span><span class="r">0.011°</span><span class="d">2 jours</span><div class="tg dis"><i></i><b>OFF</b></div><div class="sel2 dis"><span>1 h</span><svg width="9" height="6" viewBox="0 0 9 6"><path d="M.500 .800 L4.500 4.800 L8.500 .800" fill="none" stroke="#9a9a9a" stroke-width="1.100"/></svg></div></div><div class="row" style="top:411px"><span class="n">GEM</span><span class="r">0.6°</span><span class="d">6 jours</span><div class="tg on"><i></i><b>ON</b></div><div class="sel2"><span>3 h</span><svg width="9" height="6" viewBox="0 0 9 6"><path d="M.500 .800 L4.500 4.800 L8.500 .800" fill="none" stroke="#222" stroke-width="1.100"/></svg></div></div><div class="row" style="top:439px"><span class="n">GFS 0.25°</span><span class="r">0.25°</span><span class="d">10 jours</span><div class="tg on"><i></i><b>ON</b></div><div class="sel2"><span>3 h</span><svg width="9" height="6" viewBox="0 0 9 6"><path d="M.500 .800 L4.500 4.800 L8.500 .800" fill="none" stroke="#222" stroke-width="1.100"/></svg></div></div><div class="row" style="top:467px"><span class="n">GFS 0.5°</span><span class="r">0.5°</span><span class="d">10 jours</span><div class="tg on"><i></i><b>ON</b></div><div class="sel2"><span>3 h</span><svg width="9" height="6" viewBox="0 0 9 6"><path d="M.500 .800 L4.500 4.800 L8.500 .800" fill="none" stroke="#222" stroke-width="1.100"/></svg></div></div><div class="row" style="top:495px"><span class="n">GFS 1.0°</span><span class="r">1.0°</span><span class="d">16 jours</span><div class="tg on"><i></i><b>ON</b></div><div class="sel2"><span>3 h</span><svg width="9" height="6" viewBox="0 0 9 6"><path d="M.500 .800 L4.500 4.800 L8.500 .800" fill="none" stroke="#222" stroke-width="1.100"/></svg></div></div><div class="row nam" style="top:523px"><span class="n">NAM</span><span class="r">0.1°</span><span class="d">3 jours</span><div class="tg dis"><i></i><b>OFF</b></div><div class="sel2 dis"><span>12 h</span><svg width="9" height="6" viewBox="0 0 9 6"><path d="M.500 .800 L4.500 4.800 L8.500 .800" fill="none" stroke="#9a9a9a" stroke-width="1.100"/></svg></div></div><div class="hd" style="top:559px">Courants</div><div class="row dis" style="top:575px"><span class="n">MyOcean IBI</span><span class="r">0.0277°</span><span class="d">8 jours</span><div class="tg dis"><i></i><b>OFF</b></div><div class="sel2 dis"><span>1 h</span><svg width="9" height="6" viewBox="0 0 9 6"><path d="M.500 .800 L4.500 4.800 L8.500 .800" fill="none" stroke="#9a9a9a" stroke-width="1.100"/></svg></div></div><div class="row dis" style="top:603px"><span class="n">MyOcean Mercator</span><span class="r">0.083°</span><span class="d">6 jours</span><div class="tg dis"><i></i><b>OFF</b></div><div class="sel2 dis"><span>12 h</span><svg width="9" height="6" viewBox="0 0 9 6"><path d="M.500 .800 L4.500 4.800 L8.500 .800" fill="none" stroke="#9a9a9a" stroke-width="1.100"/></svg></div></div><div class="row dis" style="top:631px"><span class="n"></span><span class="r"></span><span class="d"></span><div class="tg dis"><i></i><b>OFF</b></div><div class="sel2 dis"><span></span><svg width="9" height="6" viewBox="0 0 9 6"><path d="M.500 .800 L4.500 4.800 L8.500 .800" fill="none" stroke="#9a9a9a" stroke-width="1.100"/></svg></div></div></div></div><div class="abs" style="left:888px;top:77px;width:1px;height:558px;background:#fff"></div><div class="abs" style="left:889px;top:94px;width:15px;height:360px;background:#cdcdcd"></div><svg class="abs" style="left:892px;top:82px" width="9" height="6" viewBox="0 0 9 6"><path d="M.500 5 L4.500 1 L8.500 5" fill="none" stroke="#505050" stroke-width="1.600"/></svg><svg class="abs" style="left:892px;top:623px" width="9" height="6" viewBox="0 0 9 6"><path d="M.500 1 L4.500 5 L8.500 1" fill="none" stroke="#505050" stroke-width="1.600"/></svg><div class="opth" style="left:920px;top:91px">Durée</div><div class="abs" style="left:944px;top:113px;width:121px;height:21px;background:#e1e1e1;border:1px solid #adadad"><span class="opt" style="left:4px;top:4px">16 jours</span><svg class="abs" style="left:106px;top:7px" width="9" height="6" viewBox="0 0 9 6"><path d="M.500 .800 L4.500 4.800 L8.500 .800" fill="none" stroke="#222" stroke-width="1.100"/></svg></div><div class="opth" style="left:923px;top:148px">À partir de</div><div class="rad" style="left:944px;top:174.0px"></div><div class="opt" style="left:963px;top:174.5px">Maintenant</div><div class="rad on" style="left:944px;top:197.2px"></div><div class="opt" style="left:963px;top:197.7px">Runtime du modèle</div><div class="opth" style="left:920px;top:222px;letter-spacing:-.6px">Format</div><div class="rad" style="left:944px;top:248.0px"></div><div class="opt" style="left:963px;top:248.5px">GRIB 1</div><div class="rad on" style="left:944px;top:271.0px"></div><div class="opt" style="left:963px;top:271.5px">GRIB 2</div><div class="opth" style="left:920px;top:296px;letter-spacing:-.55px">Compression</div><div class="rad on" style="left:944px;top:321.0px"></div><div class="opt" style="left:963px;top:321.5px">Bz2</div><div class="rad" style="left:944px;top:344.0px"></div><div class="opt" style="left:963px;top:344.5px">Gz</div><div class="rad" style="left:944px;top:367.0px"></div><div class="opt" style="left:963px;top:367.5px"><span style="letter-spacing:-.42px">GC High Compression</span></div><div class="opt" style="left:925px;top:554px;line-height:13px">Taille estimée: 452.19 Kb<br>(1.22 Mb décompressé)</div><div class="abs" style="left:921px;top:585px;width:186px;height:46px;background:#e1e1e1;border:1px solid #adadad"><svg class="abs" style="left:8px;top:8px" width="28" height="26" viewBox="0 0 28 26"><rect x="0" y="1" width="20" height="22" fill="#ececec" stroke="#a0a0a0" stroke-width=".800"/><path d="M13 0 h9 v12 h5 l-9.500 11 l-9.500 -11 h5z" fill="#b4dc28" stroke="#7aa010" stroke-width=".800"/></svg><span class="opt" style="left:43px;top:16px">Télécharger le GRIB</span></div><svg class="abs" style="left:70px;top:10px" width="104" height="64" viewBox="471 186 104 64"><path d="M513.2 195.4 C512.1 196.1 509.3 198.4 506.6 200.0 C503.8 201.6 499.8 204.0 496.6 204.9 C493.4 205.9 490.2 205.0 487.4 205.9 C484.7 206.9 481.8 209.0 480.0 210.8 C478.1 212.5 476.6 214.4 476.2 216.6 C475.8 218.8 476.8 221.9 477.5 224.1 C478.1 226.3 478.7 228.0 480.0 229.9 C481.2 231.8 482.7 233.9 484.9 235.7 C487.2 237.5 490.2 239.4 493.3 240.7 C496.3 242.0 499.4 243.0 503.2 243.6 C507.1 244.2 512.4 244.5 516.5 244.4 C520.7 244.4 524.3 244.0 528.2 243.2 C532.1 242.4 536.2 241.4 539.8 239.9 C543.4 238.4 546.8 236.3 549.8 234.1 C552.9 231.8 555.8 229.2 558.1 226.6 C560.5 223.9 562.6 220.7 564.0 218.3 C565.3 215.8 566.2 213.5 566.4 211.6 C566.7 209.7 566.6 208.1 565.2 206.6 C563.8 205.2 561.1 204.0 558.1 202.9 C555.1 201.8 551.2 201.1 547.3 200.0 C543.4 198.8 538.3 197.3 534.8 196.2 C531.4 195.2 529.0 194.2 526.5 193.7 C524.0 193.2 521.7 192.9 519.9 193.1 C518.0 193.2 516.1 194.3 515.3 194.6" fill="none" stroke="#ed1c24" stroke-width="3.700" stroke-linecap="round" stroke-linejoin="round"/><path d="M513 194.200 L517.400 194.200 L517 199 L513.500 199.500Z" fill="#ed1c24" stroke="#ed1c24" stroke-width="1" stroke-linejoin="round"/></svg><div class="bd"></div></div><div id="rblack" class="abs"></div></body></html>
